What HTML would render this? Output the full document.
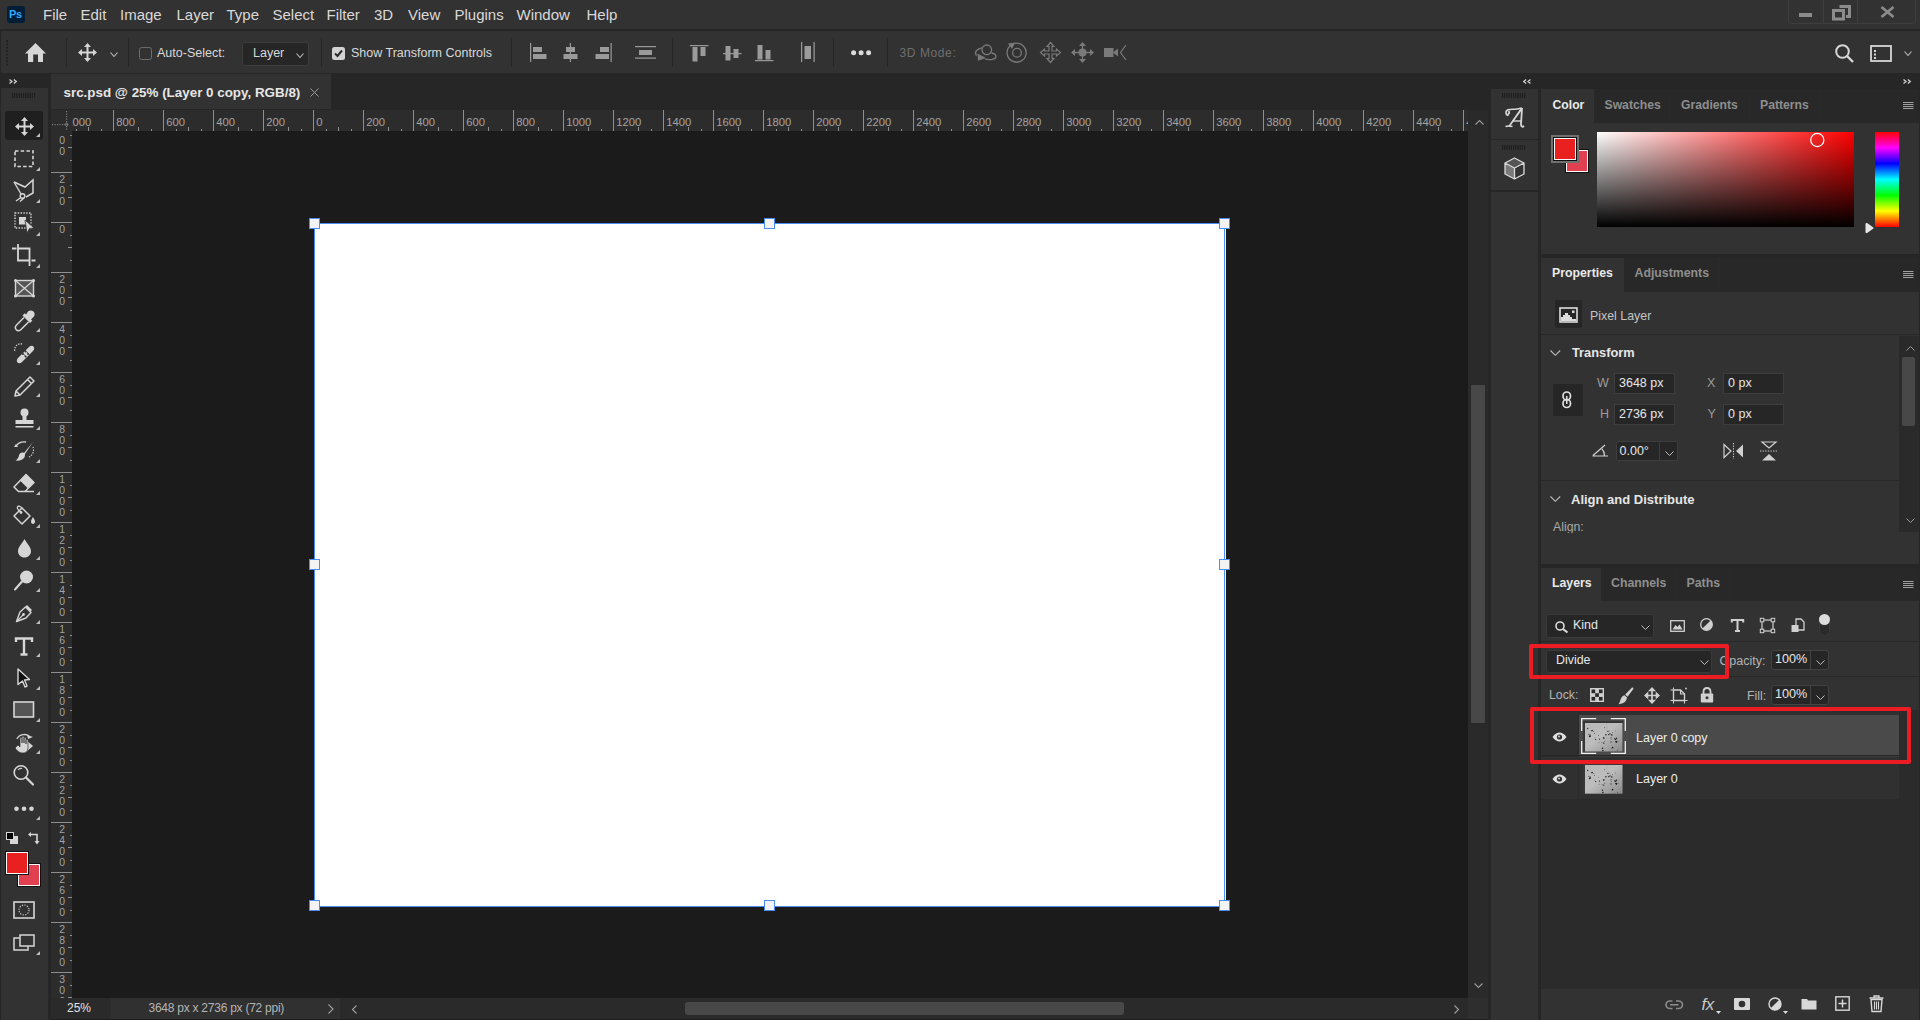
<!DOCTYPE html>
<html><head><meta charset="utf-8">
<style>
*{margin:0;padding:0;box-sizing:border-box}
html,body{width:1920px;height:1020px;overflow:hidden;background:#262626;font-family:"Liberation Sans",sans-serif;color:#d6d6d6}
.a{position:absolute}
.t{position:absolute;white-space:nowrap;line-height:1}
svg{position:absolute;overflow:visible}
</style></head><body>
<div class="a" style="left:0px;top:0px;width:1920px;height:30px;background:#323232;"></div>
<div class="a" style="left:0px;top:29px;width:1920px;height:2px;background:#262626;"></div>
<div class="a" style="left:7px;top:6px;width:18px;height:17px;background:#001e36;border-radius:3px"></div>
<div class="t" style="left:9px;top:9px;font-size:11px;font-weight:bold;color:#31a8ff;letter-spacing:-0.3px">Ps</div>
<div class="t" style="left:43px;top:7.30px;font-size:15px;color:#d9d9d9;font-weight:normal;">File</div>
<div class="t" style="left:80.5px;top:7.30px;font-size:15px;color:#d9d9d9;font-weight:normal;">Edit</div>
<div class="t" style="left:120px;top:7.30px;font-size:15px;color:#d9d9d9;font-weight:normal;">Image</div>
<div class="t" style="left:176.5px;top:7.30px;font-size:15px;color:#d9d9d9;font-weight:normal;">Layer</div>
<div class="t" style="left:226.5px;top:7.30px;font-size:15px;color:#d9d9d9;font-weight:normal;">Type</div>
<div class="t" style="left:272.5px;top:7.30px;font-size:15px;color:#d9d9d9;font-weight:normal;">Select</div>
<div class="t" style="left:326.5px;top:7.30px;font-size:15px;color:#d9d9d9;font-weight:normal;">Filter</div>
<div class="t" style="left:374px;top:7.30px;font-size:15px;color:#d9d9d9;font-weight:normal;">3D</div>
<div class="t" style="left:408px;top:7.30px;font-size:15px;color:#d9d9d9;font-weight:normal;">View</div>
<div class="t" style="left:454.5px;top:7.30px;font-size:15px;color:#d9d9d9;font-weight:normal;">Plugins</div>
<div class="t" style="left:516.5px;top:7.30px;font-size:15px;color:#d9d9d9;font-weight:normal;">Window</div>
<div class="t" style="left:586.5px;top:7.30px;font-size:15px;color:#d9d9d9;font-weight:normal;">Help</div>
<div class="a" style="left:1788px;top:-5px;width:128px;height:29px;border:1px solid #3e3e3e;border-radius:4px"></div>
<div class="a" style="left:1823px;top:0px;width:1px;height:23px;background:#3e3e3e;"></div>
<div class="a" style="left:1857px;top:0px;width:1px;height:23px;background:#3e3e3e;"></div>
<div class="a" style="left:1799px;top:13px;width:13px;height:4px;background:#8c8c8c;"></div>
<svg style="left:1832px;top:5px;" width="19" height="15" viewBox="0 0 19 15"><path d="M7.5 1.5h10v10h-3.5" fill="none" stroke="#8c8c8c" stroke-width="3"/><rect x="1.5" y="5.5" width="10" height="8.5" fill="none" stroke="#8c8c8c" stroke-width="3"/></svg>
<svg style="left:1880px;top:6px;" width="15" height="12" viewBox="0 0 15 12"><path d="M1.5 1 L13.5 11 M13.5 1 L1.5 11" stroke="#8c8c8c" stroke-width="2.7"/></svg>
<div class="a" style="left:0px;top:31px;width:1920px;height:42px;background:#323232;"></div>
<div class="a" style="left:0px;top:31px;width:1px;height:42px;background:#262626;"></div>
<svg style="left:6px;top:40px;" width="3" height="25" viewBox="0 0 3 25"><rect x="0.5" y="0.0" width="1.5" height="1.8" fill="#1e1e1e"/><rect x="0.5" y="3.4" width="1.5" height="1.8" fill="#1e1e1e"/><rect x="0.5" y="6.8" width="1.5" height="1.8" fill="#1e1e1e"/><rect x="0.5" y="10.2" width="1.5" height="1.8" fill="#1e1e1e"/><rect x="0.5" y="13.6" width="1.5" height="1.8" fill="#1e1e1e"/><rect x="0.5" y="17.0" width="1.5" height="1.8" fill="#1e1e1e"/><rect x="0.5" y="20.4" width="1.5" height="1.8" fill="#1e1e1e"/><rect x="0.5" y="23.8" width="1.5" height="1.8" fill="#1e1e1e"/></svg>
<svg style="left:25px;top:43px;" width="22" height="20" viewBox="0 0 22 20"><path d="M10.5 0 L21 10.5 L18 10.5 L18 19 L13 19 L13 11.5 L8.2 11.5 L8.2 19 L3 19 L3 10.5 L0 10.5 Z" fill="#d6d6d6"/></svg>
<div class="a" style="left:66px;top:38px;width:1px;height:29px;background:#262626;"></div>
<div class="a" style="left:128px;top:38px;width:1px;height:29px;background:#262626;"></div>
<div class="a" style="left:321px;top:38px;width:1px;height:29px;background:#262626;"></div>
<div class="a" style="left:511px;top:38px;width:1px;height:29px;background:#262626;"></div>
<div class="a" style="left:672px;top:38px;width:1px;height:29px;background:#262626;"></div>
<div class="a" style="left:833px;top:38px;width:1px;height:29px;background:#262626;"></div>
<div class="a" style="left:887px;top:38px;width:1px;height:29px;background:#262626;"></div>
<svg style="left:77.5px;top:42.5px;" width="19" height="19" viewBox="0 0 19 19"><path d="M9.5 0 L13 4 L10.5 4 L10.5 8.5 L15 8.5 L15 6 L19 9.5 L15 13 L15 10.5 L10.5 10.5 L10.5 15 L13 15 L9.5 19 L6 15 L8.5 15 L8.5 10.5 L4 10.5 L4 13 L0 9.5 L4 6 L4 8.5 L8.5 8.5 L8.5 4 L6 4 Z" fill="#d6d6d6"/></svg>
<svg style="left:109.5px;top:51.5px;" width="8" height="5" viewBox="0 0 8 5"><path d="M0.5 0.5 L4.0 4.5 L7.5 0.5" fill="none" stroke="#bdbdbd" stroke-width="1.1"/></svg>
<div class="a" style="left:139px;top:47px;width:13px;height:13px;border:1.5px solid #6b6b6b;border-radius:2.5px"></div>
<div class="t" style="left:157px;top:47.42px;font-size:12.5px;color:#d9d9d9;font-weight:normal;">Auto-Select:</div>
<div class="a" style="left:242px;top:42px;width:67px;height:24px;background:#262626;border:1px solid #3d3d3d;border-radius:3px"></div>
<div class="t" style="left:253px;top:47.42px;font-size:12.5px;color:#d9d9d9;font-weight:normal;">Layer</div>
<svg style="left:296px;top:53px;" width="8" height="5" viewBox="0 0 8 5"><path d="M0.5 0.5 L4.0 4.5 L7.5 0.5" fill="none" stroke="#bdbdbd" stroke-width="1.1"/></svg>
<div class="a" style="left:332px;top:47px;width:13px;height:13px;background:#d3d3d3;border-radius:2.5px"></div>
<svg style="left:334px;top:49px;" width="9" height="9" viewBox="0 0 9 9"><path d="M1 4.5 L3.5 7 L8 1.5" fill="none" stroke="#2a2a2a" stroke-width="2"/></svg>
<div class="t" style="left:351px;top:47.42px;font-size:12.5px;color:#d9d9d9;font-weight:normal;">Show Transform Controls</div>
<svg style="left:530px;top:43px;" width="17" height="20" viewBox="0 0 17 20"><rect x="0" y="0" width="1.2" height="19" fill="#9a9a9a"/><rect x="3" y="4" width="9" height="5" fill="#9a9a9a"/><rect x="3" y="11" width="13.5" height="5" fill="#9a9a9a"/></svg>
<svg style="left:563px;top:43px;" width="15" height="20" viewBox="0 0 15 20"><rect x="6.8" y="0" width="1.2" height="19" fill="#9a9a9a"/><rect x="3" y="4" width="9" height="5" fill="#9a9a9a"/><rect x="0.5" y="11" width="14" height="5" fill="#9a9a9a"/></svg>
<svg style="left:595px;top:43px;" width="17" height="20" viewBox="0 0 17 20"><rect x="15.5" y="0" width="1.2" height="19" fill="#9a9a9a"/><rect x="5" y="4" width="9" height="5" fill="#9a9a9a"/><rect x="0.5" y="11" width="13.5" height="5" fill="#9a9a9a"/></svg>
<svg style="left:635px;top:46px;" width="22" height="13" viewBox="0 0 22 13"><rect x="0" y="0" width="21" height="1.2" fill="#9a9a9a"/><rect x="4" y="4" width="13" height="5" fill="#9a9a9a"/><rect x="0" y="11.5" width="21" height="1.2" fill="#9a9a9a"/></svg>
<svg style="left:690px;top:45px;" width="19" height="17" viewBox="0 0 19 17"><rect x="0" y="0" width="18.5" height="1.2" fill="#9a9a9a"/><rect x="2.5" y="2" width="5" height="14.5" fill="#9a9a9a"/><rect x="10.5" y="2" width="5" height="9" fill="#9a9a9a"/></svg>
<svg style="left:723px;top:45px;" width="19" height="17" viewBox="0 0 19 17"><rect x="0" y="8" width="18.5" height="1.2" fill="#9a9a9a"/><rect x="2.5" y="1" width="5" height="14.5" fill="#9a9a9a"/><rect x="10.5" y="4" width="5" height="9" fill="#9a9a9a"/></svg>
<svg style="left:755px;top:44px;" width="19" height="18" viewBox="0 0 19 18"><rect x="0" y="16" width="18.5" height="1.2" fill="#9a9a9a"/><rect x="2.5" y="1" width="5" height="14.5" fill="#9a9a9a"/><rect x="10.5" y="6" width="5" height="9.5" fill="#9a9a9a"/></svg>
<svg style="left:801px;top:42px;" width="14" height="21" viewBox="0 0 14 21"><rect x="0" y="0" width="1.2" height="20" fill="#9a9a9a"/><rect x="12.5" y="0" width="1.2" height="20" fill="#9a9a9a"/><rect x="3.5" y="4" width="6.5" height="13" fill="#9a9a9a"/></svg>
<svg style="left:851px;top:50px;" width="21" height="6" viewBox="0 0 21 6"><circle cx="2.6" cy="2.8" r="2.5" fill="#dcdcdc"/><circle cx="10.1" cy="2.8" r="2.5" fill="#dcdcdc"/><circle cx="17.6" cy="2.8" r="2.5" fill="#dcdcdc"/></svg>
<div class="t" style="left:899.5px;top:46.84px;font-size:12px;color:#6e6e6e;font-weight:normal;letter-spacing:0.6px">3D Mode:</div>
<svg style="left:973.5px;top:44px;" width="24" height="18" viewBox="0 0 24 18"><circle cx="12.8" cy="5.8" r="4.8" fill="none" stroke="#7a7a7a" stroke-width="1.3"/><path d="M7.8 3.8 C2.5 5 0 8.5 2.5 11.5" fill="none" stroke="#7a7a7a" stroke-width="1.3"/><path d="M3.5 9.5 L12 14 L4 16.8 Z" fill="#7a7a7a"/><path d="M11 15.2 C16 16.2 22 15.5 22 12.5 C22 10.8 20.5 9.5 17.5 9" fill="none" stroke="#7a7a7a" stroke-width="1.3"/></svg>
<svg style="left:1006px;top:42px;" width="22" height="21" viewBox="0 0 22 21"><path d="M5 3 A9.5 9.5 0 1 0 9 1.3" fill="none" stroke="#7a7a7a" stroke-width="1.3"/><circle cx="11" cy="10.8" r="4.4" fill="none" stroke="#7a7a7a" stroke-width="1.3"/><path d="M2 1.5 L9.5 0.5 L6 7 Z" fill="#7a7a7a"/></svg>
<svg style="left:1040px;top:42px;" width="21" height="21" viewBox="0 0 21 21"><path d="M10.5 0.5 L14 4.5 L12 4.5 L12 9 L16.5 9 L16.5 7 L20.5 10.5 L16.5 14 L16.5 12 L12 12 L12 16.5 L14 16.5 L10.5 20.5 L7 16.5 L9 16.5 L9 12 L4.5 12 L4.5 14 L0.5 10.5 L4.5 7 L4.5 9 L9 9 L9 4.5 L7 4.5 Z" fill="none" stroke="#7a7a7a" stroke-width="1.2"/></svg>
<svg style="left:1071px;top:42px;" width="23" height="21" viewBox="0 0 23 21"><circle cx="11.5" cy="10.5" r="4" fill="#7a7a7a"/><path d="M11.5 0 L15 4 L8 4 Z M11.5 21 L15 17 L8 17 Z M0 10.5 L4 7 L4 14 Z M23 10.5 L19 7 L19 14 Z" fill="#7a7a7a"/><path d="M11.5 3 V18 M3 10.5 H20" stroke="#7a7a7a" stroke-width="1.3"/></svg>
<svg style="left:1104px;top:44px;" width="24" height="17" viewBox="0 0 24 17"><rect x="0" y="4" width="9.5" height="9" fill="#7a7a7a"/><path d="M9 8.5 L14 4.5 L14 12.5 Z" fill="#7a7a7a"/><path d="M22 1 L16.5 8.5 L22 16" fill="none" stroke="#7a7a7a" stroke-width="1.2"/></svg>
<svg style="left:1835px;top:44px;" width="20" height="19" viewBox="0 0 20 19"><circle cx="7.5" cy="7.5" r="6.3" fill="none" stroke="#d6d6d6" stroke-width="2"/><path d="M12 12 L18 18" stroke="#d6d6d6" stroke-width="2.4"/></svg>
<svg style="left:1870px;top:45px;" width="22" height="18" viewBox="0 0 22 18"><rect x="1" y="1" width="20" height="15" fill="none" stroke="#d6d6d6" stroke-width="1.8"/><rect x="4" y="5" width="2" height="2" fill="#d6d6d6"/><rect x="4" y="8.5" width="2" height="2" fill="#d6d6d6"/><rect x="4" y="12" width="2" height="2" fill="#d6d6d6"/></svg>
<svg style="left:1904px;top:51px;" width="8" height="5" viewBox="0 0 8 5"><path d="M0.5 0.5 L4.0 4.5 L7.5 0.5" fill="none" stroke="#bdbdbd" stroke-width="1.1"/></svg>
<div class="a" style="left:0px;top:73px;width:1920px;height:947px;background:#262626;"></div>
<div class="a" style="left:48px;top:73px;width:3px;height:947px;background:#262626;"></div>
<div class="a" style="left:0px;top:73px;width:1px;height:947px;background:#262626;"></div>
<div class="a" style="left:1px;top:73px;width:47px;height:15px;background:#262626;"></div>
<div class="a" style="left:1px;top:88px;width:47px;height:932px;background:#323232;"></div>
<svg style="left:9px;top:79px;" width="8" height="5" viewBox="0 0 8 5"><path d="M0.5 0.5 L3 2.5 L0.5 4.5 M4.8 0.5 L7.3 2.5 L4.8 4.5" fill="none" stroke="#d0d0d0" stroke-width="1.3"/></svg>
<svg style="left:12px;top:93px;" width="25" height="6" viewBox="0 0 25 6"><rect x="0.0" y="0" width="1.2" height="5" fill="#1f1f1f"/><rect x="2.2" y="0" width="1.2" height="5" fill="#1f1f1f"/><rect x="4.4" y="0" width="1.2" height="5" fill="#1f1f1f"/><rect x="6.6000000000000005" y="0" width="1.2" height="5" fill="#1f1f1f"/><rect x="8.8" y="0" width="1.2" height="5" fill="#1f1f1f"/><rect x="11.0" y="0" width="1.2" height="5" fill="#1f1f1f"/><rect x="13.200000000000001" y="0" width="1.2" height="5" fill="#1f1f1f"/><rect x="15.400000000000002" y="0" width="1.2" height="5" fill="#1f1f1f"/><rect x="17.6" y="0" width="1.2" height="5" fill="#1f1f1f"/><rect x="19.8" y="0" width="1.2" height="5" fill="#1f1f1f"/><rect x="22.0" y="0" width="1.2" height="5" fill="#1f1f1f"/></svg>
<div class="a" style="left:5px;top:111px;width:38px;height:29px;background:#1f1f1f;border-radius:3px"></div>
<svg style="left:14.5px;top:116.5px;" width="19" height="19" viewBox="0 0 19 19"><path d="M9.5 0 L13 4 L10.5 4 L10.5 8.5 L15 8.5 L15 6 L19 9.5 L15 13 L15 10.5 L10.5 10.5 L10.5 15 L13 15 L9.5 19 L6 15 L8.5 15 L8.5 10.5 L4 10.5 L4 13 L0 9.5 L4 6 L4 8.5 L8.5 8.5 L8.5 4 L6 4 Z" fill="#d6d6d6"/></svg>
<svg style="left:36px;top:133px;" width="4" height="4" viewBox="0 0 4 4"><path d="M4 0 L4 4 L0 4 Z" fill="#bdbdbd"/></svg>
<svg style="left:14px;top:150px;" width="20" height="18" viewBox="0 0 20 18"><rect x="1" y="1" width="18" height="15.5" fill="none" stroke="#d6d6d6" stroke-width="1.6" stroke-dasharray="3.5 2.2"/></svg>
<svg style="left:36px;top:167px;" width="4" height="4" viewBox="0 0 4 4"><path d="M4 0 L4 4 L0 4 Z" fill="#bdbdbd"/></svg>
<svg style="left:13px;top:179px;" width="22" height="23" viewBox="0 0 22 23"><path d="M1 3 L12 8 L20 1 L20 14 L13 18" fill="none" stroke="#d6d6d6" stroke-width="1.5"/><circle cx="9.5" cy="17" r="2.3" fill="none" stroke="#d6d6d6" stroke-width="1.4"/><path d="M8 18.5 L3 22 M11 19 L7 22.5" stroke="#d6d6d6" stroke-width="1.4"/><path d="M1 3 L8 15" stroke="#d6d6d6" stroke-width="1.4"/></svg>
<svg style="left:36px;top:199px;" width="4" height="4" viewBox="0 0 4 4"><path d="M4 0 L4 4 L0 4 Z" fill="#bdbdbd"/></svg>
<svg style="left:14px;top:212px;" width="21" height="21" viewBox="0 0 21 21"><rect x="1" y="1" width="16" height="15" fill="none" stroke="#d6d6d6" stroke-width="1.4" stroke-dasharray="1.4 1.4"/><rect x="5" y="5" width="7" height="7.5" fill="#d6d6d6"/><path d="M11 8 L20 16 L15.5 16.5 L13 21 Z" fill="#d6d6d6" stroke="#323232" stroke-width="0.8"/></svg>
<svg style="left:36px;top:232px;" width="4" height="4" viewBox="0 0 4 4"><path d="M4 0 L4 4 L0 4 Z" fill="#bdbdbd"/></svg>
<svg style="left:12px;top:244px;" width="24" height="23" viewBox="0 0 24 23"><path d="M0 4.5 H4.5 M6 0 V16.5 H18 M6.5 4.5 H17.5 V22 M19.5 16.5 H23.5" fill="none" stroke="#d6d6d6" stroke-width="1.8"/></svg>
<svg style="left:36px;top:264px;" width="4" height="4" viewBox="0 0 4 4"><path d="M4 0 L4 4 L0 4 Z" fill="#bdbdbd"/></svg>
<svg style="left:14px;top:279px;" width="21" height="19" viewBox="0 0 21 19"><rect x="1.5" y="1.5" width="18" height="15.5" fill="#555" stroke="#d6d6d6" stroke-width="1.4"/><path d="M1.5 1.5 L19.5 17 M19.5 1.5 L1.5 17" stroke="#d6d6d6" stroke-width="1.2"/><circle cx="1.5" cy="1.5" r="1.5" fill="#d6d6d6"/><circle cx="1.5" cy="17" r="1.5" fill="#d6d6d6"/><circle cx="19.5" cy="1.5" r="1.5" fill="#d6d6d6"/><circle cx="19.5" cy="17" r="1.5" fill="#d6d6d6"/></svg>
<svg style="left:14px;top:310px;" width="21" height="21" viewBox="0 0 21 21"><path d="M14 1.5 C15.5 0 18 0 19.5 1.5 C21 3 21 5.5 19.5 7 L17 9.5 L18.3 10.8 L16 13 L8.5 5.5 L10.7 3.3 L12 4.6 Z" fill="#d6d6d6"/><path d="M10 7.5 L2.5 15 C1 16.5 1 18.5 2.3 19.7 C3.5 21 5.5 21 7 19.5 L14.5 12" fill="none" stroke="#d6d6d6" stroke-width="1.5"/></svg>
<svg style="left:36px;top:328px;" width="4" height="4" viewBox="0 0 4 4"><path d="M4 0 L4 4 L0 4 Z" fill="#bdbdbd"/></svg>
<svg style="left:13px;top:342px;" width="22" height="22" viewBox="0 0 22 22"><path d="M9 2 A6 6 0 0 0 2 10" fill="none" stroke="#d6d6d6" stroke-width="1.3" stroke-dasharray="1.3 1.3"/><path d="M5 16 L16 5 C17.5 3.5 19.5 3.5 20.5 4.5 C21.5 5.5 21.5 7.5 20 9 L9 20 C7.5 21.5 5.5 21.5 4.5 20.5 C3.5 19.5 3.5 17.5 5 16 Z" fill="#d6d6d6"/><g fill="#323232"><circle cx="10" cy="12" r="0.9"/><circle cx="12.5" cy="9.5" r="0.9"/><circle cx="12.5" cy="14.5" r="0.9"/><circle cx="15" cy="12" r="0.9"/></g><path d="M8.5 10 L13.5 15 M11 7.5 L16.5 12.5" stroke="#323232" stroke-width="0.8"/></svg>
<svg style="left:36px;top:361px;" width="4" height="4" viewBox="0 0 4 4"><path d="M4 0 L4 4 L0 4 Z" fill="#bdbdbd"/></svg>
<svg style="left:14px;top:376px;" width="21" height="20" viewBox="0 0 21 20"><path d="M16 1 L20 5 L6 19 L1 20 L2 15 Z M13.5 3.5 L17.5 7.5 M2 15 L6 19" fill="none" stroke="#d6d6d6" stroke-width="1.5" stroke-linejoin="round"/></svg>
<svg style="left:36px;top:393px;" width="4" height="4" viewBox="0 0 4 4"><path d="M4 0 L4 4 L0 4 Z" fill="#bdbdbd"/></svg>
<svg style="left:14px;top:408px;" width="21" height="21" viewBox="0 0 21 21"><circle cx="10.5" cy="4.5" r="4" fill="#d6d6d6"/><rect x="8.5" y="7" width="4" height="5" fill="#d6d6d6"/><path d="M1.5 12 H19.5 V16 H1.5 Z" fill="#d6d6d6"/><rect x="1.5" y="18" width="18" height="1.5" fill="#d6d6d6"/></svg>
<svg style="left:36px;top:426px;" width="4" height="4" viewBox="0 0 4 4"><path d="M4 0 L4 4 L0 4 Z" fill="#bdbdbd"/></svg>
<svg style="left:12px;top:440px;" width="24" height="22" viewBox="0 0 24 22"><path d="M2 7 H6 L4 4 Z" fill="#d6d6d6"/><path d="M4 6 C6 3 10 1.5 14 2" fill="none" stroke="#d6d6d6" stroke-width="1.4"/><path d="M21 2 L12 13 C10 12 7.5 13 7 15.5 C6.5 18 5 19.5 3.5 20.5 C7 21 10.5 20 12 18 C13 16.5 13 15 13 14 Z" fill="#d6d6d6"/><path d="M21 7 A8 8 0 0 1 17 17" fill="none" stroke="#d6d6d6" stroke-width="1.2" stroke-dasharray="1.3 1.3"/></svg>
<svg style="left:36px;top:459px;" width="4" height="4" viewBox="0 0 4 4"><path d="M4 0 L4 4 L0 4 Z" fill="#bdbdbd"/></svg>
<svg style="left:12px;top:473px;" width="23" height="21" viewBox="0 0 23 21"><path d="M14 1.5 L22 9.5 L13 18.5 L6.5 18.5 L2 14 Z" fill="none" stroke="#d6d6d6" stroke-width="1.5" stroke-linejoin="round"/><path d="M14 1.5 L22 9.5 L16 15.5 L8 7.5 Z" fill="#d6d6d6"/><path d="M13 18.5 H22" stroke="#d6d6d6" stroke-width="1.5"/></svg>
<svg style="left:36px;top:491px;" width="4" height="4" viewBox="0 0 4 4"><path d="M4 0 L4 4 L0 4 Z" fill="#bdbdbd"/></svg>
<svg style="left:13px;top:505px;" width="24" height="22" viewBox="0 0 24 22"><path d="M9 3 L17 11 L9 19 L1 11 Z" fill="none" stroke="#d6d6d6" stroke-width="1.5" stroke-linejoin="round"/><path d="M9 3 C7 1 5 0.5 4.5 2 C4 3.5 6 6 8 7.5" fill="none" stroke="#d6d6d6" stroke-width="1.3"/><circle cx="8" cy="7.5" r="1.4" fill="#d6d6d6"/><path d="M20 12 C21 14 22 15 22 16.5 C22 18 21 19 20 19 C19 19 18 18 18 16.5 C18 15 19 14 20 12 Z" fill="#d6d6d6"/></svg>
<svg style="left:36px;top:524px;" width="4" height="4" viewBox="0 0 4 4"><path d="M4 0 L4 4 L0 4 Z" fill="#bdbdbd"/></svg>
<svg style="left:17px;top:539px;" width="15" height="19" viewBox="0 0 15 19"><path d="M7.5 0 C9.5 4 14 8 14 12 C14 16 11 18.5 7.5 18.5 C4 18.5 1 16 1 12 C1 8 5.5 4 7.5 0 Z" fill="#d6d6d6"/></svg>
<svg style="left:36px;top:556px;" width="4" height="4" viewBox="0 0 4 4"><path d="M4 0 L4 4 L0 4 Z" fill="#bdbdbd"/></svg>
<svg style="left:14px;top:570px;" width="20" height="21" viewBox="0 0 20 21"><circle cx="12.5" cy="7" r="6.5" fill="#d6d6d6"/><path d="M8 11.5 L1 19.5" stroke="#d6d6d6" stroke-width="2" stroke-linecap="round"/></svg>
<svg style="left:36px;top:588px;" width="4" height="4" viewBox="0 0 4 4"><path d="M4 0 L4 4 L0 4 Z" fill="#bdbdbd"/></svg>
<svg style="left:15px;top:604px;" width="18" height="19" viewBox="0 0 18 19"><path d="M12 1 L17 6 L15.5 7.5 L10.5 2.5 Z" fill="#d6d6d6"/><path d="M10.5 3 L16 8.5 L11 14 L1.5 17.5 L5 8 Z" fill="none" stroke="#d6d6d6" stroke-width="1.4" stroke-linejoin="round"/><circle cx="8.5" cy="10.5" r="1.4" fill="#d6d6d6"/><path d="M1.5 17.5 L8 11" stroke="#d6d6d6" stroke-width="1.1"/></svg>
<svg style="left:36px;top:620px;" width="4" height="4" viewBox="0 0 4 4"><path d="M4 0 L4 4 L0 4 Z" fill="#bdbdbd"/></svg>
<svg style="left:15px;top:637px;" width="18" height="19" viewBox="0 0 18 19"><path d="M1 5 V1.5 H17 V5 M9 1.5 V17.5 M5.5 17.5 H12.5" fill="none" stroke="#d6d6d6" stroke-width="2.4"/></svg>
<svg style="left:36px;top:653px;" width="4" height="4" viewBox="0 0 4 4"><path d="M4 0 L4 4 L0 4 Z" fill="#bdbdbd"/></svg>
<svg style="left:17px;top:668px;" width="14" height="20" viewBox="0 0 14 20"><path d="M1 1 L12.5 11.5 L7.5 12 L10 18 L8 19 L5.5 13 L1 16.5 Z" fill="#111" stroke="#d6d6d6" stroke-width="1.4" stroke-linejoin="round"/></svg>
<svg style="left:36px;top:686px;" width="4" height="4" viewBox="0 0 4 4"><path d="M4 0 L4 4 L0 4 Z" fill="#bdbdbd"/></svg>
<svg style="left:13px;top:701px;" width="22" height="17" viewBox="0 0 22 17"><rect x="1" y="1" width="19.5" height="15" fill="#555" stroke="#d6d6d6" stroke-width="1.6"/></svg>
<svg style="left:36px;top:718px;" width="4" height="4" viewBox="0 0 4 4"><path d="M4 0 L4 4 L0 4 Z" fill="#bdbdbd"/></svg>
<svg style="left:13px;top:732px;" width="23" height="23" viewBox="0 0 23 23"><path d="M4 7 C6 2 14 1 17 5" fill="none" stroke="#d6d6d6" stroke-width="1.3"/><path d="M14 3 L20 5 L15 7 Z" fill="#d6d6d6"/><path d="M12 7 L20 14 L12 21 Z" fill="#d6d6d6"/><path d="M2 16 L5 13 L7 15 L7 6 C7 5 9 5 9 6 L9 11 L9 5 C9 4 11 4 11 5 L11 11 L11 6 C11 5 13 5 13 6 L13 12 L13 8 C13 7 15 7 15 8 L15 16 C15 19 13 21 10 21 C7 21 5 20 2 16 Z" fill="#d6d6d6" stroke="#323232" stroke-width="0.7"/></svg>
<svg style="left:36px;top:750px;" width="4" height="4" viewBox="0 0 4 4"><path d="M4 0 L4 4 L0 4 Z" fill="#bdbdbd"/></svg>
<svg style="left:13px;top:764px;" width="22" height="22" viewBox="0 0 22 22"><circle cx="8" cy="8.5" r="6.8" fill="none" stroke="#d6d6d6" stroke-width="1.6"/><path d="M5 6 A4 4 0 0 1 9 4.5" fill="none" stroke="#d6d6d6" stroke-width="1.1"/><path d="M13 13.5 L20 20.5" stroke="#d6d6d6" stroke-width="2.2" stroke-linecap="round"/></svg>
<svg style="left:13px;top:805px;" width="22" height="8" viewBox="0 0 22 8"><circle cx="3.5" cy="3.7" r="2.3" fill="#d6d6d6"/><circle cx="11.0" cy="3.7" r="2.3" fill="#d6d6d6"/><circle cx="18.5" cy="3.7" r="2.3" fill="#d6d6d6"/></svg>
<svg style="left:36px;top:816px;" width="4" height="4" viewBox="0 0 4 4"><path d="M4 0 L4 4 L0 4 Z" fill="#bdbdbd"/></svg>
<div class="a" style="left:10px;top:836px;width:8px;height:8px;background:#d6d6d6;"></div>
<div class="a" style="left:6px;top:832px;width:8px;height:8px;background:#000;border:1px solid #d6d6d6"></div>
<svg style="left:27px;top:832px;" width="13" height="13" viewBox="0 0 13 13"><path d="M1 2.5 L4 0 L4 5 Z" fill="#d6d6d6"/><path d="M3 2.5 H10 V9" fill="none" stroke="#d6d6d6" stroke-width="1.6"/><path d="M7.5 9 L10 12.5 L12.5 9 Z" fill="#d6d6d6"/></svg>
<div class="a" style="left:18px;top:864px;width:22px;height:22px;background:#e0404f;border:1.5px solid #fafafa;outline:1px solid #111"></div>
<div class="a" style="left:6px;top:852px;width:22px;height:22px;background:#e82020;border:1.5px solid #fafafa;outline:1px solid #111"></div>
<svg style="left:13px;top:901px;" width="22" height="18" viewBox="0 0 22 18"><rect x="1" y="1" width="20" height="16" fill="none" stroke="#d6d6d6" stroke-width="1.6"/><circle cx="11" cy="9" r="5" fill="none" stroke="#d6d6d6" stroke-width="1.2" stroke-dasharray="1.2 1.4"/></svg>
<svg style="left:13px;top:934px;" width="22" height="18" viewBox="0 0 22 18"><rect x="1" y="4" width="14" height="12" fill="none" stroke="#d6d6d6" stroke-width="1.5"/><rect x="7" y="1" width="14" height="11" fill="#323232" stroke="#d6d6d6" stroke-width="1.5"/></svg>
<svg style="left:36px;top:951px;" width="4" height="4" viewBox="0 0 4 4"><path d="M4 0 L4 4 L0 4 Z" fill="#bdbdbd"/></svg>
<div class="a" style="left:51px;top:73px;width:1437px;height:37px;background:#262626;"></div>
<div class="a" style="left:51px;top:74px;width:280px;height:35px;background:#323232;"></div>
<div class="t" style="left:63.5px;top:86.16px;font-size:13.4px;color:#e6e6e6;font-weight:bold;">src.psd @ 25% (Layer 0 copy, RGB/8)</div>
<svg style="left:310px;top:88px;" width="9" height="9" viewBox="0 0 9 9"><path d="M0.5 0.5 L8.5 8.5 M8.5 0.5 L0.5 8.5" stroke="#9a9a9a" stroke-width="1"/></svg>
<div class="a" style="left:51px;top:110px;width:1417px;height:21px;background:#2c2c2c;"></div>
<div class="a" style="left:51px;top:131px;width:21px;height:867px;background:#2c2c2c;"></div>
<div class="a" style="left:76px;top:129px;width:1px;height:2px;background:#8f8f8f;"></div>
<div class="a" style="left:88px;top:127px;width:1px;height:4px;background:#8f8f8f;"></div>
<div class="a" style="left:101px;top:129px;width:1px;height:2px;background:#8f8f8f;"></div>
<div class="a" style="left:113px;top:110px;width:1px;height:21px;background:#8f8f8f;"></div>
<div class="a" style="left:126px;top:129px;width:1px;height:2px;background:#8f8f8f;"></div>
<div class="a" style="left:138px;top:127px;width:1px;height:4px;background:#8f8f8f;"></div>
<div class="a" style="left:151px;top:129px;width:1px;height:2px;background:#8f8f8f;"></div>
<div class="a" style="left:163px;top:110px;width:1px;height:21px;background:#8f8f8f;"></div>
<div class="a" style="left:176px;top:129px;width:1px;height:2px;background:#8f8f8f;"></div>
<div class="a" style="left:188px;top:127px;width:1px;height:4px;background:#8f8f8f;"></div>
<div class="a" style="left:201px;top:129px;width:1px;height:2px;background:#8f8f8f;"></div>
<div class="a" style="left:213px;top:110px;width:1px;height:21px;background:#8f8f8f;"></div>
<div class="a" style="left:226px;top:129px;width:1px;height:2px;background:#8f8f8f;"></div>
<div class="a" style="left:238px;top:127px;width:1px;height:4px;background:#8f8f8f;"></div>
<div class="a" style="left:251px;top:129px;width:1px;height:2px;background:#8f8f8f;"></div>
<div class="a" style="left:263px;top:110px;width:1px;height:21px;background:#8f8f8f;"></div>
<div class="a" style="left:276px;top:129px;width:1px;height:2px;background:#8f8f8f;"></div>
<div class="a" style="left:288px;top:127px;width:1px;height:4px;background:#8f8f8f;"></div>
<div class="a" style="left:301px;top:129px;width:1px;height:2px;background:#8f8f8f;"></div>
<div class="a" style="left:313px;top:110px;width:1px;height:21px;background:#8f8f8f;"></div>
<div class="a" style="left:326px;top:129px;width:1px;height:2px;background:#8f8f8f;"></div>
<div class="a" style="left:338px;top:127px;width:1px;height:4px;background:#8f8f8f;"></div>
<div class="a" style="left:351px;top:129px;width:1px;height:2px;background:#8f8f8f;"></div>
<div class="a" style="left:363px;top:110px;width:1px;height:21px;background:#8f8f8f;"></div>
<div class="a" style="left:376px;top:129px;width:1px;height:2px;background:#8f8f8f;"></div>
<div class="a" style="left:388px;top:127px;width:1px;height:4px;background:#8f8f8f;"></div>
<div class="a" style="left:401px;top:129px;width:1px;height:2px;background:#8f8f8f;"></div>
<div class="a" style="left:413px;top:110px;width:1px;height:21px;background:#8f8f8f;"></div>
<div class="a" style="left:426px;top:129px;width:1px;height:2px;background:#8f8f8f;"></div>
<div class="a" style="left:438px;top:127px;width:1px;height:4px;background:#8f8f8f;"></div>
<div class="a" style="left:451px;top:129px;width:1px;height:2px;background:#8f8f8f;"></div>
<div class="a" style="left:463px;top:110px;width:1px;height:21px;background:#8f8f8f;"></div>
<div class="a" style="left:476px;top:129px;width:1px;height:2px;background:#8f8f8f;"></div>
<div class="a" style="left:488px;top:127px;width:1px;height:4px;background:#8f8f8f;"></div>
<div class="a" style="left:501px;top:129px;width:1px;height:2px;background:#8f8f8f;"></div>
<div class="a" style="left:513px;top:110px;width:1px;height:21px;background:#8f8f8f;"></div>
<div class="a" style="left:526px;top:129px;width:1px;height:2px;background:#8f8f8f;"></div>
<div class="a" style="left:538px;top:127px;width:1px;height:4px;background:#8f8f8f;"></div>
<div class="a" style="left:551px;top:129px;width:1px;height:2px;background:#8f8f8f;"></div>
<div class="a" style="left:563px;top:110px;width:1px;height:21px;background:#8f8f8f;"></div>
<div class="a" style="left:576px;top:129px;width:1px;height:2px;background:#8f8f8f;"></div>
<div class="a" style="left:588px;top:127px;width:1px;height:4px;background:#8f8f8f;"></div>
<div class="a" style="left:601px;top:129px;width:1px;height:2px;background:#8f8f8f;"></div>
<div class="a" style="left:613px;top:110px;width:1px;height:21px;background:#8f8f8f;"></div>
<div class="a" style="left:626px;top:129px;width:1px;height:2px;background:#8f8f8f;"></div>
<div class="a" style="left:638px;top:127px;width:1px;height:4px;background:#8f8f8f;"></div>
<div class="a" style="left:651px;top:129px;width:1px;height:2px;background:#8f8f8f;"></div>
<div class="a" style="left:663px;top:110px;width:1px;height:21px;background:#8f8f8f;"></div>
<div class="a" style="left:676px;top:129px;width:1px;height:2px;background:#8f8f8f;"></div>
<div class="a" style="left:688px;top:127px;width:1px;height:4px;background:#8f8f8f;"></div>
<div class="a" style="left:701px;top:129px;width:1px;height:2px;background:#8f8f8f;"></div>
<div class="a" style="left:713px;top:110px;width:1px;height:21px;background:#8f8f8f;"></div>
<div class="a" style="left:726px;top:129px;width:1px;height:2px;background:#8f8f8f;"></div>
<div class="a" style="left:738px;top:127px;width:1px;height:4px;background:#8f8f8f;"></div>
<div class="a" style="left:751px;top:129px;width:1px;height:2px;background:#8f8f8f;"></div>
<div class="a" style="left:763px;top:110px;width:1px;height:21px;background:#8f8f8f;"></div>
<div class="a" style="left:776px;top:129px;width:1px;height:2px;background:#8f8f8f;"></div>
<div class="a" style="left:788px;top:127px;width:1px;height:4px;background:#8f8f8f;"></div>
<div class="a" style="left:801px;top:129px;width:1px;height:2px;background:#8f8f8f;"></div>
<div class="a" style="left:813px;top:110px;width:1px;height:21px;background:#8f8f8f;"></div>
<div class="a" style="left:826px;top:129px;width:1px;height:2px;background:#8f8f8f;"></div>
<div class="a" style="left:838px;top:127px;width:1px;height:4px;background:#8f8f8f;"></div>
<div class="a" style="left:851px;top:129px;width:1px;height:2px;background:#8f8f8f;"></div>
<div class="a" style="left:863px;top:110px;width:1px;height:21px;background:#8f8f8f;"></div>
<div class="a" style="left:876px;top:129px;width:1px;height:2px;background:#8f8f8f;"></div>
<div class="a" style="left:888px;top:127px;width:1px;height:4px;background:#8f8f8f;"></div>
<div class="a" style="left:901px;top:129px;width:1px;height:2px;background:#8f8f8f;"></div>
<div class="a" style="left:913px;top:110px;width:1px;height:21px;background:#8f8f8f;"></div>
<div class="a" style="left:926px;top:129px;width:1px;height:2px;background:#8f8f8f;"></div>
<div class="a" style="left:938px;top:127px;width:1px;height:4px;background:#8f8f8f;"></div>
<div class="a" style="left:951px;top:129px;width:1px;height:2px;background:#8f8f8f;"></div>
<div class="a" style="left:963px;top:110px;width:1px;height:21px;background:#8f8f8f;"></div>
<div class="a" style="left:976px;top:129px;width:1px;height:2px;background:#8f8f8f;"></div>
<div class="a" style="left:988px;top:127px;width:1px;height:4px;background:#8f8f8f;"></div>
<div class="a" style="left:1001px;top:129px;width:1px;height:2px;background:#8f8f8f;"></div>
<div class="a" style="left:1013px;top:110px;width:1px;height:21px;background:#8f8f8f;"></div>
<div class="a" style="left:1026px;top:129px;width:1px;height:2px;background:#8f8f8f;"></div>
<div class="a" style="left:1038px;top:127px;width:1px;height:4px;background:#8f8f8f;"></div>
<div class="a" style="left:1051px;top:129px;width:1px;height:2px;background:#8f8f8f;"></div>
<div class="a" style="left:1063px;top:110px;width:1px;height:21px;background:#8f8f8f;"></div>
<div class="a" style="left:1076px;top:129px;width:1px;height:2px;background:#8f8f8f;"></div>
<div class="a" style="left:1088px;top:127px;width:1px;height:4px;background:#8f8f8f;"></div>
<div class="a" style="left:1101px;top:129px;width:1px;height:2px;background:#8f8f8f;"></div>
<div class="a" style="left:1113px;top:110px;width:1px;height:21px;background:#8f8f8f;"></div>
<div class="a" style="left:1126px;top:129px;width:1px;height:2px;background:#8f8f8f;"></div>
<div class="a" style="left:1138px;top:127px;width:1px;height:4px;background:#8f8f8f;"></div>
<div class="a" style="left:1151px;top:129px;width:1px;height:2px;background:#8f8f8f;"></div>
<div class="a" style="left:1163px;top:110px;width:1px;height:21px;background:#8f8f8f;"></div>
<div class="a" style="left:1176px;top:129px;width:1px;height:2px;background:#8f8f8f;"></div>
<div class="a" style="left:1188px;top:127px;width:1px;height:4px;background:#8f8f8f;"></div>
<div class="a" style="left:1201px;top:129px;width:1px;height:2px;background:#8f8f8f;"></div>
<div class="a" style="left:1213px;top:110px;width:1px;height:21px;background:#8f8f8f;"></div>
<div class="a" style="left:1226px;top:129px;width:1px;height:2px;background:#8f8f8f;"></div>
<div class="a" style="left:1238px;top:127px;width:1px;height:4px;background:#8f8f8f;"></div>
<div class="a" style="left:1251px;top:129px;width:1px;height:2px;background:#8f8f8f;"></div>
<div class="a" style="left:1263px;top:110px;width:1px;height:21px;background:#8f8f8f;"></div>
<div class="a" style="left:1276px;top:129px;width:1px;height:2px;background:#8f8f8f;"></div>
<div class="a" style="left:1288px;top:127px;width:1px;height:4px;background:#8f8f8f;"></div>
<div class="a" style="left:1301px;top:129px;width:1px;height:2px;background:#8f8f8f;"></div>
<div class="a" style="left:1313px;top:110px;width:1px;height:21px;background:#8f8f8f;"></div>
<div class="a" style="left:1326px;top:129px;width:1px;height:2px;background:#8f8f8f;"></div>
<div class="a" style="left:1338px;top:127px;width:1px;height:4px;background:#8f8f8f;"></div>
<div class="a" style="left:1351px;top:129px;width:1px;height:2px;background:#8f8f8f;"></div>
<div class="a" style="left:1363px;top:110px;width:1px;height:21px;background:#8f8f8f;"></div>
<div class="a" style="left:1376px;top:129px;width:1px;height:2px;background:#8f8f8f;"></div>
<div class="a" style="left:1388px;top:127px;width:1px;height:4px;background:#8f8f8f;"></div>
<div class="a" style="left:1401px;top:129px;width:1px;height:2px;background:#8f8f8f;"></div>
<div class="a" style="left:1413px;top:110px;width:1px;height:21px;background:#8f8f8f;"></div>
<div class="a" style="left:1426px;top:129px;width:1px;height:2px;background:#8f8f8f;"></div>
<div class="a" style="left:1438px;top:127px;width:1px;height:4px;background:#8f8f8f;"></div>
<div class="a" style="left:1451px;top:129px;width:1px;height:2px;background:#8f8f8f;"></div>
<div class="a" style="left:1463px;top:110px;width:1px;height:21px;background:#8f8f8f;"></div>
<div class="a" style="left:72px;top:110px;width:1396px;height:21px;overflow:hidden">
<div class="t" style="left:-5.8px;top:7.23px;font-size:11.3px;color:#a3a3a3">1000</div>
<div class="t" style="left:44.2px;top:7.23px;font-size:11.3px;color:#a3a3a3">800</div>
<div class="t" style="left:94.2px;top:7.23px;font-size:11.3px;color:#a3a3a3">600</div>
<div class="t" style="left:144.2px;top:7.23px;font-size:11.3px;color:#a3a3a3">400</div>
<div class="t" style="left:194.2px;top:7.23px;font-size:11.3px;color:#a3a3a3">200</div>
<div class="t" style="left:244.2px;top:7.23px;font-size:11.3px;color:#a3a3a3">0</div>
<div class="t" style="left:294.2px;top:7.23px;font-size:11.3px;color:#a3a3a3">200</div>
<div class="t" style="left:344.2px;top:7.23px;font-size:11.3px;color:#a3a3a3">400</div>
<div class="t" style="left:394.2px;top:7.23px;font-size:11.3px;color:#a3a3a3">600</div>
<div class="t" style="left:444.2px;top:7.23px;font-size:11.3px;color:#a3a3a3">800</div>
<div class="t" style="left:494.2px;top:7.23px;font-size:11.3px;color:#a3a3a3">1000</div>
<div class="t" style="left:544.2px;top:7.23px;font-size:11.3px;color:#a3a3a3">1200</div>
<div class="t" style="left:594.2px;top:7.23px;font-size:11.3px;color:#a3a3a3">1400</div>
<div class="t" style="left:644.2px;top:7.23px;font-size:11.3px;color:#a3a3a3">1600</div>
<div class="t" style="left:694.2px;top:7.23px;font-size:11.3px;color:#a3a3a3">1800</div>
<div class="t" style="left:744.2px;top:7.23px;font-size:11.3px;color:#a3a3a3">2000</div>
<div class="t" style="left:794.2px;top:7.23px;font-size:11.3px;color:#a3a3a3">2200</div>
<div class="t" style="left:844.2px;top:7.23px;font-size:11.3px;color:#a3a3a3">2400</div>
<div class="t" style="left:894.2px;top:7.23px;font-size:11.3px;color:#a3a3a3">2600</div>
<div class="t" style="left:944.2px;top:7.23px;font-size:11.3px;color:#a3a3a3">2800</div>
<div class="t" style="left:994.2px;top:7.23px;font-size:11.3px;color:#a3a3a3">3000</div>
<div class="t" style="left:1044.2px;top:7.23px;font-size:11.3px;color:#a3a3a3">3200</div>
<div class="t" style="left:1094.2px;top:7.23px;font-size:11.3px;color:#a3a3a3">3400</div>
<div class="t" style="left:1144.2px;top:7.23px;font-size:11.3px;color:#a3a3a3">3600</div>
<div class="t" style="left:1194.2px;top:7.23px;font-size:11.3px;color:#a3a3a3">3800</div>
<div class="t" style="left:1244.2px;top:7.23px;font-size:11.3px;color:#a3a3a3">4000</div>
<div class="t" style="left:1294.2px;top:7.23px;font-size:11.3px;color:#a3a3a3">4200</div>
<div class="t" style="left:1344.2px;top:7.23px;font-size:11.3px;color:#a3a3a3">4400</div>
<div class="t" style="left:1394.2px;top:7.23px;font-size:11.3px;color:#a3a3a3">4600</div>
</div>
<div class="a" style="left:70px;top:135px;width:2px;height:1px;background:#8f8f8f;"></div>
<div class="a" style="left:68px;top:147px;width:4px;height:1px;background:#8f8f8f;"></div>
<div class="a" style="left:70px;top:160px;width:2px;height:1px;background:#8f8f8f;"></div>
<div class="a" style="left:51px;top:172px;width:21px;height:1px;background:#8f8f8f;"></div>
<div class="a" style="left:70px;top:185px;width:2px;height:1px;background:#8f8f8f;"></div>
<div class="a" style="left:68px;top:197px;width:4px;height:1px;background:#8f8f8f;"></div>
<div class="a" style="left:70px;top:210px;width:2px;height:1px;background:#8f8f8f;"></div>
<div class="a" style="left:51px;top:222px;width:21px;height:1px;background:#8f8f8f;"></div>
<div class="a" style="left:70px;top:235px;width:2px;height:1px;background:#8f8f8f;"></div>
<div class="a" style="left:68px;top:247px;width:4px;height:1px;background:#8f8f8f;"></div>
<div class="a" style="left:70px;top:260px;width:2px;height:1px;background:#8f8f8f;"></div>
<div class="a" style="left:51px;top:272px;width:21px;height:1px;background:#8f8f8f;"></div>
<div class="a" style="left:70px;top:285px;width:2px;height:1px;background:#8f8f8f;"></div>
<div class="a" style="left:68px;top:297px;width:4px;height:1px;background:#8f8f8f;"></div>
<div class="a" style="left:70px;top:310px;width:2px;height:1px;background:#8f8f8f;"></div>
<div class="a" style="left:51px;top:322px;width:21px;height:1px;background:#8f8f8f;"></div>
<div class="a" style="left:70px;top:335px;width:2px;height:1px;background:#8f8f8f;"></div>
<div class="a" style="left:68px;top:347px;width:4px;height:1px;background:#8f8f8f;"></div>
<div class="a" style="left:70px;top:360px;width:2px;height:1px;background:#8f8f8f;"></div>
<div class="a" style="left:51px;top:372px;width:21px;height:1px;background:#8f8f8f;"></div>
<div class="a" style="left:70px;top:385px;width:2px;height:1px;background:#8f8f8f;"></div>
<div class="a" style="left:68px;top:397px;width:4px;height:1px;background:#8f8f8f;"></div>
<div class="a" style="left:70px;top:410px;width:2px;height:1px;background:#8f8f8f;"></div>
<div class="a" style="left:51px;top:422px;width:21px;height:1px;background:#8f8f8f;"></div>
<div class="a" style="left:70px;top:435px;width:2px;height:1px;background:#8f8f8f;"></div>
<div class="a" style="left:68px;top:447px;width:4px;height:1px;background:#8f8f8f;"></div>
<div class="a" style="left:70px;top:460px;width:2px;height:1px;background:#8f8f8f;"></div>
<div class="a" style="left:51px;top:472px;width:21px;height:1px;background:#8f8f8f;"></div>
<div class="a" style="left:70px;top:485px;width:2px;height:1px;background:#8f8f8f;"></div>
<div class="a" style="left:68px;top:497px;width:4px;height:1px;background:#8f8f8f;"></div>
<div class="a" style="left:70px;top:510px;width:2px;height:1px;background:#8f8f8f;"></div>
<div class="a" style="left:51px;top:522px;width:21px;height:1px;background:#8f8f8f;"></div>
<div class="a" style="left:70px;top:535px;width:2px;height:1px;background:#8f8f8f;"></div>
<div class="a" style="left:68px;top:547px;width:4px;height:1px;background:#8f8f8f;"></div>
<div class="a" style="left:70px;top:560px;width:2px;height:1px;background:#8f8f8f;"></div>
<div class="a" style="left:51px;top:572px;width:21px;height:1px;background:#8f8f8f;"></div>
<div class="a" style="left:70px;top:585px;width:2px;height:1px;background:#8f8f8f;"></div>
<div class="a" style="left:68px;top:597px;width:4px;height:1px;background:#8f8f8f;"></div>
<div class="a" style="left:70px;top:610px;width:2px;height:1px;background:#8f8f8f;"></div>
<div class="a" style="left:51px;top:622px;width:21px;height:1px;background:#8f8f8f;"></div>
<div class="a" style="left:70px;top:635px;width:2px;height:1px;background:#8f8f8f;"></div>
<div class="a" style="left:68px;top:647px;width:4px;height:1px;background:#8f8f8f;"></div>
<div class="a" style="left:70px;top:660px;width:2px;height:1px;background:#8f8f8f;"></div>
<div class="a" style="left:51px;top:672px;width:21px;height:1px;background:#8f8f8f;"></div>
<div class="a" style="left:70px;top:685px;width:2px;height:1px;background:#8f8f8f;"></div>
<div class="a" style="left:68px;top:697px;width:4px;height:1px;background:#8f8f8f;"></div>
<div class="a" style="left:70px;top:710px;width:2px;height:1px;background:#8f8f8f;"></div>
<div class="a" style="left:51px;top:722px;width:21px;height:1px;background:#8f8f8f;"></div>
<div class="a" style="left:70px;top:735px;width:2px;height:1px;background:#8f8f8f;"></div>
<div class="a" style="left:68px;top:747px;width:4px;height:1px;background:#8f8f8f;"></div>
<div class="a" style="left:70px;top:760px;width:2px;height:1px;background:#8f8f8f;"></div>
<div class="a" style="left:51px;top:772px;width:21px;height:1px;background:#8f8f8f;"></div>
<div class="a" style="left:70px;top:785px;width:2px;height:1px;background:#8f8f8f;"></div>
<div class="a" style="left:68px;top:797px;width:4px;height:1px;background:#8f8f8f;"></div>
<div class="a" style="left:70px;top:810px;width:2px;height:1px;background:#8f8f8f;"></div>
<div class="a" style="left:51px;top:822px;width:21px;height:1px;background:#8f8f8f;"></div>
<div class="a" style="left:70px;top:835px;width:2px;height:1px;background:#8f8f8f;"></div>
<div class="a" style="left:68px;top:847px;width:4px;height:1px;background:#8f8f8f;"></div>
<div class="a" style="left:70px;top:860px;width:2px;height:1px;background:#8f8f8f;"></div>
<div class="a" style="left:51px;top:872px;width:21px;height:1px;background:#8f8f8f;"></div>
<div class="a" style="left:70px;top:885px;width:2px;height:1px;background:#8f8f8f;"></div>
<div class="a" style="left:68px;top:897px;width:4px;height:1px;background:#8f8f8f;"></div>
<div class="a" style="left:70px;top:910px;width:2px;height:1px;background:#8f8f8f;"></div>
<div class="a" style="left:51px;top:922px;width:21px;height:1px;background:#8f8f8f;"></div>
<div class="a" style="left:70px;top:935px;width:2px;height:1px;background:#8f8f8f;"></div>
<div class="a" style="left:68px;top:947px;width:4px;height:1px;background:#8f8f8f;"></div>
<div class="a" style="left:70px;top:960px;width:2px;height:1px;background:#8f8f8f;"></div>
<div class="a" style="left:51px;top:972px;width:21px;height:1px;background:#8f8f8f;"></div>
<div class="a" style="left:70px;top:985px;width:2px;height:1px;background:#8f8f8f;"></div>
<div class="a" style="left:68px;top:997px;width:4px;height:1px;background:#8f8f8f;"></div>
<div class="a" style="left:51px;top:131px;width:21px;height:867px;overflow:hidden">
<div class="t" style="left:8.3px;top:4.90px;font-size:10.4px;color:#a3a3a3">0</div>
<div class="t" style="left:8.3px;top:15.90px;font-size:10.4px;color:#a3a3a3">0</div>
<div class="t" style="left:8.3px;top:43.90px;font-size:10.4px;color:#a3a3a3">2</div>
<div class="t" style="left:8.3px;top:54.90px;font-size:10.4px;color:#a3a3a3">0</div>
<div class="t" style="left:8.3px;top:65.90px;font-size:10.4px;color:#a3a3a3">0</div>
<div class="t" style="left:8.3px;top:93.90px;font-size:10.4px;color:#a3a3a3">0</div>
<div class="t" style="left:8.3px;top:143.90px;font-size:10.4px;color:#a3a3a3">2</div>
<div class="t" style="left:8.3px;top:154.90px;font-size:10.4px;color:#a3a3a3">0</div>
<div class="t" style="left:8.3px;top:165.90px;font-size:10.4px;color:#a3a3a3">0</div>
<div class="t" style="left:8.3px;top:193.90px;font-size:10.4px;color:#a3a3a3">4</div>
<div class="t" style="left:8.3px;top:204.90px;font-size:10.4px;color:#a3a3a3">0</div>
<div class="t" style="left:8.3px;top:215.90px;font-size:10.4px;color:#a3a3a3">0</div>
<div class="t" style="left:8.3px;top:243.90px;font-size:10.4px;color:#a3a3a3">6</div>
<div class="t" style="left:8.3px;top:254.90px;font-size:10.4px;color:#a3a3a3">0</div>
<div class="t" style="left:8.3px;top:265.90px;font-size:10.4px;color:#a3a3a3">0</div>
<div class="t" style="left:8.3px;top:293.90px;font-size:10.4px;color:#a3a3a3">8</div>
<div class="t" style="left:8.3px;top:304.90px;font-size:10.4px;color:#a3a3a3">0</div>
<div class="t" style="left:8.3px;top:315.90px;font-size:10.4px;color:#a3a3a3">0</div>
<div class="t" style="left:8.3px;top:343.90px;font-size:10.4px;color:#a3a3a3">1</div>
<div class="t" style="left:8.3px;top:354.90px;font-size:10.4px;color:#a3a3a3">0</div>
<div class="t" style="left:8.3px;top:365.90px;font-size:10.4px;color:#a3a3a3">0</div>
<div class="t" style="left:8.3px;top:376.90px;font-size:10.4px;color:#a3a3a3">0</div>
<div class="t" style="left:8.3px;top:393.90px;font-size:10.4px;color:#a3a3a3">1</div>
<div class="t" style="left:8.3px;top:404.90px;font-size:10.4px;color:#a3a3a3">2</div>
<div class="t" style="left:8.3px;top:415.90px;font-size:10.4px;color:#a3a3a3">0</div>
<div class="t" style="left:8.3px;top:426.90px;font-size:10.4px;color:#a3a3a3">0</div>
<div class="t" style="left:8.3px;top:443.90px;font-size:10.4px;color:#a3a3a3">1</div>
<div class="t" style="left:8.3px;top:454.90px;font-size:10.4px;color:#a3a3a3">4</div>
<div class="t" style="left:8.3px;top:465.90px;font-size:10.4px;color:#a3a3a3">0</div>
<div class="t" style="left:8.3px;top:476.90px;font-size:10.4px;color:#a3a3a3">0</div>
<div class="t" style="left:8.3px;top:493.90px;font-size:10.4px;color:#a3a3a3">1</div>
<div class="t" style="left:8.3px;top:504.90px;font-size:10.4px;color:#a3a3a3">6</div>
<div class="t" style="left:8.3px;top:515.90px;font-size:10.4px;color:#a3a3a3">0</div>
<div class="t" style="left:8.3px;top:526.90px;font-size:10.4px;color:#a3a3a3">0</div>
<div class="t" style="left:8.3px;top:543.90px;font-size:10.4px;color:#a3a3a3">1</div>
<div class="t" style="left:8.3px;top:554.90px;font-size:10.4px;color:#a3a3a3">8</div>
<div class="t" style="left:8.3px;top:565.90px;font-size:10.4px;color:#a3a3a3">0</div>
<div class="t" style="left:8.3px;top:576.90px;font-size:10.4px;color:#a3a3a3">0</div>
<div class="t" style="left:8.3px;top:593.90px;font-size:10.4px;color:#a3a3a3">2</div>
<div class="t" style="left:8.3px;top:604.90px;font-size:10.4px;color:#a3a3a3">0</div>
<div class="t" style="left:8.3px;top:615.90px;font-size:10.4px;color:#a3a3a3">0</div>
<div class="t" style="left:8.3px;top:626.90px;font-size:10.4px;color:#a3a3a3">0</div>
<div class="t" style="left:8.3px;top:643.90px;font-size:10.4px;color:#a3a3a3">2</div>
<div class="t" style="left:8.3px;top:654.90px;font-size:10.4px;color:#a3a3a3">2</div>
<div class="t" style="left:8.3px;top:665.90px;font-size:10.4px;color:#a3a3a3">0</div>
<div class="t" style="left:8.3px;top:676.90px;font-size:10.4px;color:#a3a3a3">0</div>
<div class="t" style="left:8.3px;top:693.90px;font-size:10.4px;color:#a3a3a3">2</div>
<div class="t" style="left:8.3px;top:704.90px;font-size:10.4px;color:#a3a3a3">4</div>
<div class="t" style="left:8.3px;top:715.90px;font-size:10.4px;color:#a3a3a3">0</div>
<div class="t" style="left:8.3px;top:726.90px;font-size:10.4px;color:#a3a3a3">0</div>
<div class="t" style="left:8.3px;top:743.90px;font-size:10.4px;color:#a3a3a3">2</div>
<div class="t" style="left:8.3px;top:754.90px;font-size:10.4px;color:#a3a3a3">6</div>
<div class="t" style="left:8.3px;top:765.90px;font-size:10.4px;color:#a3a3a3">0</div>
<div class="t" style="left:8.3px;top:776.90px;font-size:10.4px;color:#a3a3a3">0</div>
<div class="t" style="left:8.3px;top:793.90px;font-size:10.4px;color:#a3a3a3">2</div>
<div class="t" style="left:8.3px;top:804.90px;font-size:10.4px;color:#a3a3a3">8</div>
<div class="t" style="left:8.3px;top:815.90px;font-size:10.4px;color:#a3a3a3">0</div>
<div class="t" style="left:8.3px;top:826.90px;font-size:10.4px;color:#a3a3a3">0</div>
<div class="t" style="left:8.3px;top:843.90px;font-size:10.4px;color:#a3a3a3">3</div>
<div class="t" style="left:8.3px;top:854.90px;font-size:10.4px;color:#a3a3a3">0</div>
<div class="t" style="left:8.3px;top:865.90px;font-size:10.4px;color:#a3a3a3">0</div>
<div class="t" style="left:8.3px;top:876.90px;font-size:10.4px;color:#a3a3a3">0</div>
</div>
<svg style="left:51px;top:110px;" width="21" height="21" viewBox="0 0 21 21"><rect x="1.0" y="14" width="1.2" height="1.2" fill="#7a7a7a"/><rect x="3.5" y="14" width="1.2" height="1.2" fill="#7a7a7a"/><rect x="6.0" y="14" width="1.2" height="1.2" fill="#7a7a7a"/><rect x="8.5" y="14" width="1.2" height="1.2" fill="#7a7a7a"/><rect x="11.0" y="14" width="1.2" height="1.2" fill="#7a7a7a"/><rect x="13.5" y="14" width="1.2" height="1.2" fill="#7a7a7a"/><rect x="16.0" y="14" width="1.2" height="1.2" fill="#7a7a7a"/><rect x="15" y="1.0" width="1.2" height="1.2" fill="#7a7a7a"/><rect x="15" y="3.5" width="1.2" height="1.2" fill="#7a7a7a"/><rect x="15" y="6.0" width="1.2" height="1.2" fill="#7a7a7a"/><rect x="15" y="8.5" width="1.2" height="1.2" fill="#7a7a7a"/><rect x="15" y="11.0" width="1.2" height="1.2" fill="#7a7a7a"/><rect x="15" y="13.5" width="1.2" height="1.2" fill="#7a7a7a"/><rect x="15" y="16.0" width="1.2" height="1.2" fill="#7a7a7a"/><rect x="15" y="18.5" width="1.2" height="1.2" fill="#7a7a7a"/><circle cx="15.5" cy="14.5" r="1.5" fill="none" stroke="#7a7a7a" stroke-width="0.8"/></svg>
<div class="a" style="left:72px;top:131px;width:1396px;height:867px;background:#1b1b1b;"></div>
<div class="a" style="left:1468px;top:110px;width:20px;height:888px;background:#2a2a2a;"></div>
<div class="a" style="left:1471px;top:385px;width:14px;height:338px;background:#484848;border-radius:1px"></div>
<svg style="left:1474.5px;top:120px;" width="9" height="5" viewBox="0 0 9 5"><path d="M0.5 4.5 L4.5 0.5 L8.5 4.5" fill="none" stroke="#9a9a9a" stroke-width="1.1"/></svg>
<svg style="left:1474px;top:983px;" width="9" height="5" viewBox="0 0 9 5"><path d="M0.5 0.5 L4.5 4.5 L8.5 0.5" fill="none" stroke="#9a9a9a" stroke-width="1.1"/></svg>
<div class="a" style="left:51px;top:998px;width:1437px;height:21px;background:#2a2a2a;"></div>
<div class="a" style="left:51px;top:1019px;width:1437px;height:1px;background:#1e1e1e;"></div>
<div class="a" style="left:111px;top:998px;width:229px;height:21px;background:#303030;"></div>
<div class="t" style="left:67px;top:1001.54px;font-size:12px;color:#e2e2e2;font-weight:normal;">25%</div>
<div class="t" style="left:148.5px;top:1001.84px;font-size:12px;color:#b4b4b4;font-weight:normal;letter-spacing:-0.25px">3648 px x 2736 px (72 ppi)</div>
<svg style="left:328px;top:1004px;" width="6" height="10" viewBox="0 0 6 10"><path d="M0.5 0.5 L5 5 L0.5 9.5" fill="none" stroke="#a0a0a0" stroke-width="1.1"/></svg>
<svg style="left:351.5px;top:1004.5px;" width="5" height="9" viewBox="0 0 5 9"><path d="M4.5 0.5 L0.5 4.5 L4.5 8.5" fill="none" stroke="#a0a0a0" stroke-width="1.1"/></svg>
<div class="a" style="left:685px;top:1002px;width:439px;height:13px;background:#484848;border-radius:3px"></div>
<svg style="left:1453.5px;top:1005px;" width="5" height="9" viewBox="0 0 5 9"><path d="M0.5 0.5 L4.5 4.5 L0.5 8.5" fill="none" stroke="#a0a0a0" stroke-width="1.1"/></svg>
<div class="a" style="left:1468px;top:998px;width:20px;height:21px;background:#2e2e2e;"></div>
<div class="a" style="left:314px;top:223px;width:911px;height:684px;background:#ffffff;border:1px solid #4b8cf5"></div>
<div class="a" style="left:1225px;top:224px;width:1px;height:682px;background:#f4f6fa;"></div>
<div class="a" style="left:309.0px;top:218.0px;width:11px;height:11px;background:#f3f3f3;border:1.5px solid #4b8cf5"></div>
<div class="a" style="left:309.0px;top:559.0px;width:11px;height:11px;background:#f3f3f3;border:1.5px solid #4b8cf5"></div>
<div class="a" style="left:309.0px;top:900.0px;width:11px;height:11px;background:#f3f3f3;border:1.5px solid #4b8cf5"></div>
<div class="a" style="left:764.0px;top:218.0px;width:11px;height:11px;background:#f3f3f3;border:1.5px solid #4b8cf5"></div>
<div class="a" style="left:764.0px;top:900.0px;width:11px;height:11px;background:#f3f3f3;border:1.5px solid #4b8cf5"></div>
<div class="a" style="left:1219.0px;top:218.0px;width:11px;height:11px;background:#f3f3f3;border:1.5px solid #4b8cf5"></div>
<div class="a" style="left:1219.0px;top:559.0px;width:11px;height:11px;background:#f3f3f3;border:1.5px solid #4b8cf5"></div>
<div class="a" style="left:1219.0px;top:900.0px;width:11px;height:11px;background:#f3f3f3;border:1.5px solid #4b8cf5"></div>
<div class="a" style="left:1488px;top:73px;width:3px;height:947px;background:#262626;"></div>
<div class="a" style="left:1491px;top:73px;width:47px;height:16px;background:#262626;"></div>
<svg style="left:1523px;top:79px;" width="8" height="5" viewBox="0 0 8 5"><path d="M3.2 0.5 L0.7 2.5 L3.2 4.5 M7.5 0.5 L5 2.5 L7.5 4.5" fill="none" stroke="#d0d0d0" stroke-width="1.3"/></svg>
<div class="a" style="left:1491px;top:89px;width:47px;height:50px;background:#323232;"></div>
<div class="a" style="left:1491px;top:140px;width:47px;height:50px;background:#323232;"></div>
<div class="a" style="left:1491px;top:192px;width:47px;height:828px;background:#323232;"></div>
<svg style="left:1502px;top:93px;" width="25" height="5" viewBox="0 0 25 5"><rect x="0.0" y="0" width="1.2" height="4.8" fill="#1f1f1f"/><rect x="2.2" y="0" width="1.2" height="4.8" fill="#1f1f1f"/><rect x="4.4" y="0" width="1.2" height="4.8" fill="#1f1f1f"/><rect x="6.6000000000000005" y="0" width="1.2" height="4.8" fill="#1f1f1f"/><rect x="8.8" y="0" width="1.2" height="4.8" fill="#1f1f1f"/><rect x="11.0" y="0" width="1.2" height="4.8" fill="#1f1f1f"/><rect x="13.200000000000001" y="0" width="1.2" height="4.8" fill="#1f1f1f"/><rect x="15.400000000000002" y="0" width="1.2" height="4.8" fill="#1f1f1f"/><rect x="17.6" y="0" width="1.2" height="4.8" fill="#1f1f1f"/><rect x="19.8" y="0" width="1.2" height="4.8" fill="#1f1f1f"/><rect x="22.0" y="0" width="1.2" height="4.8" fill="#1f1f1f"/></svg>
<svg style="left:1502px;top:145px;" width="25" height="5" viewBox="0 0 25 5"><rect x="0.0" y="0" width="1.2" height="4.8" fill="#1f1f1f"/><rect x="2.2" y="0" width="1.2" height="4.8" fill="#1f1f1f"/><rect x="4.4" y="0" width="1.2" height="4.8" fill="#1f1f1f"/><rect x="6.6000000000000005" y="0" width="1.2" height="4.8" fill="#1f1f1f"/><rect x="8.8" y="0" width="1.2" height="4.8" fill="#1f1f1f"/><rect x="11.0" y="0" width="1.2" height="4.8" fill="#1f1f1f"/><rect x="13.200000000000001" y="0" width="1.2" height="4.8" fill="#1f1f1f"/><rect x="15.400000000000002" y="0" width="1.2" height="4.8" fill="#1f1f1f"/><rect x="17.6" y="0" width="1.2" height="4.8" fill="#1f1f1f"/><rect x="19.8" y="0" width="1.2" height="4.8" fill="#1f1f1f"/><rect x="22.0" y="0" width="1.2" height="4.8" fill="#1f1f1f"/></svg>
<svg style="left:1505px;top:108px;" width="19" height="20" viewBox="0 0 19 20"><path d="M3.5 7.5 C0.5 7 0 3 3 1.8 C5.5 0.8 9 1.5 12 1 C14 0.7 15.5 0.3 17 0" fill="none" stroke="#d8d8d8" stroke-width="1.6"/><path d="M3 6.5 C4.5 5.5 4.5 4 3.5 3" fill="none" stroke="#d8d8d8" stroke-width="1.8"/><path d="M17 0 L15.5 0.5 L3 18.5 L5 18.5 L16.5 2.5 Z" fill="#d8d8d8"/><path d="M0.5 18.5 C2 17.8 5 17.8 7.5 18.5" fill="none" stroke="#d8d8d8" stroke-width="1.5"/><path d="M17 0 L16 16.5 C16 18.5 17.5 19.5 19 18" fill="none" stroke="#d8d8d8" stroke-width="1.8"/><path d="M7.5 13 H16.5" stroke="#d8d8d8" stroke-width="1.4"/></svg>
<svg style="left:1504px;top:157px;" width="21" height="23" viewBox="0 0 21 23"><path d="M10.5 1 L20 6 L10.5 11 L1 6 Z" fill="#555"/><path d="M1 6 L10.5 11 L10.5 22 L1 17 Z" fill="#7a7a7a"/><path d="M10.5 11 L20 6 L20 17 L10.5 22 Z" fill="#333"/><path d="M10.5 1 L20 6 L20 17 L10.5 22 L1 17 L1 6 Z M1 6 L10.5 11 L20 6 M10.5 11 V22" fill="none" stroke="#dcdcdc" stroke-width="1.3" stroke-linejoin="round"/></svg>
<div class="a" style="left:1541px;top:73px;width:379px;height:16px;background:#262626;"></div>
<svg style="left:1903px;top:79px;" width="8" height="5" viewBox="0 0 8 5"><path d="M0.5 0.5 L3 2.5 L0.5 4.5 M4.8 0.5 L7.3 2.5 L4.8 4.5" fill="none" stroke="#d0d0d0" stroke-width="1.3"/></svg>
<div class="a" style="left:1541px;top:89px;width:378px;height:34px;background:#282828;"></div>
<div class="a" style="left:1541px;top:89px;width:53px;height:35px;background:#323232;"></div>
<div class="a" style="left:1669px;top:89px;width:1px;height:34px;background:#2a2a2a;"></div>
<div class="a" style="left:1749px;top:89px;width:1px;height:34px;background:#2a2a2a;"></div>
<div class="a" style="left:1819px;top:89px;width:1px;height:34px;background:#2a2a2a;"></div>
<div class="t" style="left:1552.5px;top:99.17px;font-size:12.2px;color:#eaeaea;font-weight:bold;">Color</div>
<div class="t" style="left:1604.5px;top:99.17px;font-size:12.2px;color:#8e8e8e;font-weight:bold;">Swatches</div>
<div class="t" style="left:1681px;top:99.17px;font-size:12.2px;color:#8e8e8e;font-weight:bold;">Gradients</div>
<div class="t" style="left:1760px;top:99.17px;font-size:12.2px;color:#8e8e8e;font-weight:bold;">Patterns</div>
<svg style="left:1903px;top:102px;" width="11" height="8" viewBox="0 0 11 8"><rect x="0" y="0" width="10.5" height="1" fill="#a0a0a0"/><rect x="0" y="2" width="10.5" height="1" fill="#a0a0a0"/><rect x="0" y="4" width="10.5" height="1" fill="#a0a0a0"/><rect x="0" y="6" width="10.5" height="1" fill="#a0a0a0"/></svg>
<div class="a" style="left:1541px;top:123px;width:378px;height:131px;background:#323232;"></div>
<div class="a" style="left:1566px;top:150px;width:22px;height:22px;background:#e0404f;border:1.5px solid #fafafa;outline:1px solid #111"></div>
<div class="a" style="left:1551px;top:135px;width:28px;height:28px;background:#707070;"></div>
<div class="a" style="left:1554px;top:138px;width:22px;height:22px;background:#e82020;border:1.5px solid #fafafa;outline:1px solid #111"></div>
<div class="a" style="left:1597px;top:132px;width:257px;height:95px;background:linear-gradient(to bottom,rgba(0,0,0,0),#000),linear-gradient(to right,#fff,#f00)"></div>
<svg style="left:1809.5px;top:133px;" width="15" height="15" viewBox="0 0 15 15"><circle cx="7.3" cy="7" r="6.6" fill="none" stroke="#fff" stroke-width="1.2"/></svg>
<div class="a" style="left:1875px;top:132px;width:24px;height:95px;background:linear-gradient(to bottom,#f00 0%,#f0f 16.7%,#00f 33.3%,#0ff 50%,#0f0 66.7%,#ff0 83.3%,#f00 100%)"></div>
<svg style="left:1864px;top:223px;" width="10" height="10" viewBox="0 0 10 10"><path d="M1.5 1 C1.5 0 2.5 -0.3 3.5 0.3 L9 4.2 C9.8 4.7 9.8 5.3 9 5.8 L3.5 9.7 C2.5 10.3 1.5 10 1.5 9 Z" fill="#e6e6e6"/></svg>
<div class="a" style="left:1919px;top:89px;width:1px;height:931px;background:#262626;"></div>
<div class="a" style="left:1541px;top:258px;width:378px;height:34px;background:#282828;"></div>
<div class="a" style="left:1541px;top:258px;width:83px;height:35px;background:#323232;"></div>
<div class="a" style="left:1719px;top:258px;width:1px;height:34px;background:#2a2a2a;"></div>
<div class="t" style="left:1552px;top:267.09px;font-size:12.3px;color:#eaeaea;font-weight:bold;">Properties</div>
<div class="t" style="left:1634.5px;top:267.09px;font-size:12.3px;color:#8e8e8e;font-weight:bold;">Adjustments</div>
<svg style="left:1903px;top:271px;" width="11" height="8" viewBox="0 0 11 8"><rect x="0" y="0" width="10.5" height="1" fill="#a0a0a0"/><rect x="0" y="2" width="10.5" height="1" fill="#a0a0a0"/><rect x="0" y="4" width="10.5" height="1" fill="#a0a0a0"/><rect x="0" y="6" width="10.5" height="1" fill="#a0a0a0"/></svg>
<div class="a" style="left:1541px;top:292px;width:378px;height:272px;background:#323232;"></div>
<div class="a" style="left:1555px;top:300px;width:27px;height:28px;background:#262626;border-radius:2px"></div>
<svg style="left:1559px;top:307px;" width="19" height="16" viewBox="0 0 19 16"><rect x="1" y="1" width="17" height="14" fill="none" stroke="#dcdcdc" stroke-width="1.6"/><path d="M2 14 L2 10 L4 10 L4 8 L6 8 L6 6 L9 6 L9 8 L11 8 L11 10 L13 10 L13 12 L17 12 L17 14 Z" fill="#dcdcdc"/><rect x="13" y="3.5" width="2.5" height="2.5" fill="#dcdcdc"/></svg>
<div class="t" style="left:1590px;top:310.00px;font-size:12.4px;color:#c4c4c4;font-weight:normal;">Pixel Layer</div>
<div class="a" style="left:1541px;top:334px;width:378px;height:1px;background:#282828;"></div>
<div class="a" style="left:1899px;top:336px;width:20px;height:196px;background:#2a2a2a;"></div>
<svg style="left:1906px;top:346px;" width="9" height="5" viewBox="0 0 9 5"><path d="M0.5 4.5 L4.5 0.5 L8.5 4.5" fill="none" stroke="#9a9a9a" stroke-width="1"/></svg>
<div class="a" style="left:1902px;top:357px;width:13px;height:69px;background:#484848;border-radius:2px"></div>
<svg style="left:1906px;top:517.5px;" width="9" height="5" viewBox="0 0 9 5"><path d="M0.5 0.5 L4.5 4.5 L8.5 0.5" fill="none" stroke="#9a9a9a" stroke-width="1"/></svg>
<svg style="left:1550px;top:350px;" width="11" height="6" viewBox="0 0 11 6"><path d="M0.5 0.5 L5.3 5.3 L10.2 0.5" fill="none" stroke="#bdbdbd" stroke-width="1.1"/></svg>
<div class="t" style="left:1572px;top:347.16px;font-size:12.8px;color:#e6e6e6;font-weight:bold;">Transform</div>
<div class="a" style="left:1553px;top:384px;width:30px;height:32px;background:#262626;border-radius:2px"></div>
<svg style="left:1562px;top:391px;" width="10" height="18" viewBox="0 0 10 18"><rect x="1" y="1" width="7.5" height="8" rx="3.7" fill="none" stroke="#e0e0e0" stroke-width="1.7"/><rect x="1" y="8.5" width="7.5" height="8" rx="3.7" fill="none" stroke="#e0e0e0" stroke-width="1.7"/><rect x="4" y="5" width="1.5" height="8" fill="#e0e0e0"/></svg>
<div class="t" style="left:1597px;top:377.42px;font-size:12.5px;color:#9c9c9c;font-weight:normal;">W</div>
<div class="a" style="left:1614px;top:373px;width:61px;height:21px;background:#262626;border:1px solid #3d3d3d"></div>
<div class="t" style="left:1619px;top:377.42px;font-size:12.5px;color:#e6e6e6;font-weight:normal;">3648 px</div>
<div class="t" style="left:1600px;top:408.42px;font-size:12.5px;color:#9c9c9c;font-weight:normal;">H</div>
<div class="a" style="left:1614px;top:404px;width:61px;height:21px;background:#262626;border:1px solid #3d3d3d"></div>
<div class="t" style="left:1619px;top:408.42px;font-size:12.5px;color:#e6e6e6;font-weight:normal;">2736 px</div>
<div class="t" style="left:1707px;top:377.42px;font-size:12.5px;color:#9c9c9c;font-weight:normal;">X</div>
<div class="a" style="left:1723px;top:373px;width:61px;height:21px;background:#262626;border:1px solid #3d3d3d"></div>
<div class="t" style="left:1728px;top:377.42px;font-size:12.5px;color:#e6e6e6;font-weight:normal;">0 px</div>
<div class="t" style="left:1707.5px;top:408.42px;font-size:12.5px;color:#9c9c9c;font-weight:normal;">Y</div>
<div class="a" style="left:1723px;top:404px;width:61px;height:21px;background:#262626;border:1px solid #3d3d3d"></div>
<div class="t" style="left:1728px;top:408.42px;font-size:12.5px;color:#e6e6e6;font-weight:normal;">0 px</div>
<svg style="left:1592px;top:444px;" width="17" height="13" viewBox="0 0 17 13"><path d="M0.5 12 H16 M1 11.5 L13 1 M10 5 C12 7 12.5 9 12.5 12" fill="none" stroke="#d0d0d0" stroke-width="1.2"/></svg>
<div class="a" style="left:1616px;top:441px;width:62px;height:20px;background:#262626;border:1px solid #3d3d3d;border-radius:2px"></div>
<div class="a" style="left:1659px;top:442px;width:1px;height:19px;background:#3d3d3d;"></div>
<div class="t" style="left:1619.5px;top:445.42px;font-size:12.5px;color:#e6e6e6;font-weight:normal;">0.00°</div>
<svg style="left:1665px;top:451px;" width="9" height="5" viewBox="0 0 9 5"><path d="M0.5 0.5 L4.5 4.5 L8.5 0.5" fill="none" stroke="#bdbdbd" stroke-width="1"/></svg>
<svg style="left:1723px;top:443px;" width="21" height="16" viewBox="0 0 21 16"><path d="M1 1.5 L8 8 L1 14.5 Z" fill="none" stroke="#d0d0d0" stroke-width="1.2"/><path d="M20 1.5 L13 8 L20 14.5 Z" fill="#d0d0d0"/><path d="M10.5 0 V16" stroke="#d0d0d0" stroke-width="1" stroke-dasharray="1.3 1.3"/></svg>
<svg style="left:1760px;top:441px;" width="18" height="20" viewBox="0 0 18 20"><path d="M2 1 H16 L9 7 Z" fill="none" stroke="#d0d0d0" stroke-width="1.2"/><path d="M2 19.5 H16 L9 13 Z" fill="#d0d0d0"/><path d="M0 10 H18" stroke="#d0d0d0" stroke-width="1" stroke-dasharray="1.3 1.3"/></svg>
<div class="a" style="left:1541px;top:480px;width:358px;height:1px;background:#282828;"></div>
<svg style="left:1550px;top:496px;" width="11" height="6" viewBox="0 0 11 6"><path d="M0.5 0.5 L5.3 5.3 L10.2 0.5" fill="none" stroke="#bdbdbd" stroke-width="1.1"/></svg>
<div class="t" style="left:1571px;top:493.00px;font-size:13px;color:#e6e6e6;font-weight:bold;">Align and Distribute</div>
<div class="a" style="left:1541px;top:518px;width:200px;height:14.5px;overflow:hidden">
<div class="t" style="left:12px;top:3.39px;font-size:12.3px;color:#a8a8a8">Align:</div>
</div>
<div class="a" style="left:1541px;top:568px;width:378px;height:33px;background:#282828;"></div>
<div class="a" style="left:1541px;top:568px;width:60px;height:34px;background:#323232;"></div>
<div class="a" style="left:1675px;top:568px;width:1px;height:33px;background:#2a2a2a;"></div>
<div class="a" style="left:1729px;top:568px;width:1px;height:33px;background:#2a2a2a;"></div>
<div class="t" style="left:1552px;top:577.39px;font-size:12.3px;color:#eaeaea;font-weight:bold;">Layers</div>
<div class="t" style="left:1611px;top:577.39px;font-size:12.3px;color:#8e8e8e;font-weight:bold;">Channels</div>
<div class="t" style="left:1686.5px;top:577.39px;font-size:12.3px;color:#8e8e8e;font-weight:bold;">Paths</div>
<svg style="left:1903px;top:581px;" width="11" height="8" viewBox="0 0 11 8"><rect x="0" y="0" width="10.5" height="1" fill="#a0a0a0"/><rect x="0" y="2" width="10.5" height="1" fill="#a0a0a0"/><rect x="0" y="4" width="10.5" height="1" fill="#a0a0a0"/><rect x="0" y="6" width="10.5" height="1" fill="#a0a0a0"/></svg>
<div class="a" style="left:1541px;top:601px;width:378px;height:419px;background:#323232;"></div>
<div class="a" style="left:1545.5px;top:614px;width:108px;height:24px;background:#262626;border:1px solid #3a3a3a;border-radius:3px"></div>
<svg style="left:1555px;top:621px;" width="14" height="12" viewBox="0 0 14 12"><circle cx="5" cy="5" r="4" fill="none" stroke="#dcdcdc" stroke-width="1.6"/><path d="M8 8 L12.5 11.5" stroke="#dcdcdc" stroke-width="2"/></svg>
<div class="t" style="left:1573px;top:619.42px;font-size:12.5px;color:#e6e6e6;font-weight:normal;">Kind</div>
<svg style="left:1641px;top:624.5px;" width="9" height="5" viewBox="0 0 9 5"><path d="M0.5 0.5 L4.5 4.5 L8.5 0.5" fill="none" stroke="#bdbdbd" stroke-width="1"/></svg>
<svg style="left:1669.5px;top:619.5px;" width="15" height="12" viewBox="0 0 15 12"><rect x="0.7" y="0.7" width="13.6" height="10.6" fill="none" stroke="#d0d0d0" stroke-width="1.3"/><path d="M2.5 9.5 L5.5 5 L7.5 7 L9.5 4.5 L12.5 9.5 Z" fill="#d0d0d0"/></svg>
<svg style="left:1700px;top:618px;" width="13" height="13" viewBox="0 0 13 13"><circle cx="6.5" cy="6.5" r="5.8" fill="none" stroke="#d0d0d0" stroke-width="1.3"/><path d="M10.6 2.4 A5.8 5.8 0 0 1 2.4 10.6 Z" fill="#d0d0d0"/></svg>
<svg style="left:1731px;top:619px;" width="13" height="13" viewBox="0 0 13 13"><path d="M0.8 3.5 V1 H12.2 V3.5 M6.5 1 V12 M4 12 H9" fill="none" stroke="#d0d0d0" stroke-width="2"/></svg>
<svg style="left:1760px;top:618px;" width="15" height="15" viewBox="0 0 15 15"><rect x="2" y="2" width="11" height="11" fill="none" stroke="#d0d0d0" stroke-width="1.2"/><rect x="0.3" y="0.3" width="3.5" height="3.5" fill="#323232" stroke="#d0d0d0" stroke-width="1"/><rect x="0.3" y="11.2" width="3.5" height="3.5" fill="#323232" stroke="#d0d0d0" stroke-width="1"/><rect x="11.2" y="0.3" width="3.5" height="3.5" fill="#323232" stroke="#d0d0d0" stroke-width="1"/><rect x="11.2" y="11.2" width="3.5" height="3.5" fill="#323232" stroke="#d0d0d0" stroke-width="1"/></svg>
<svg style="left:1791px;top:618px;" width="14" height="15" viewBox="0 0 14 15"><path d="M5 1 H10 L13 4 V12 H5 Z" fill="none" stroke="#d0d0d0" stroke-width="1.3"/><rect x="0.5" y="7" width="7" height="7" fill="#d0d0d0"/></svg>
<div class="a" style="left:1819px;top:614px;width:11px;height:22px;border:1px solid #3a3a3a;border-radius:6px;background:#2a2a2a"></div>
<div class="a" style="left:1819px;top:614px;width:11px;height:11px;border-radius:6px;background:#dcdcdc"></div>
<div class="a" style="left:1541px;top:641px;width:378px;height:1px;background:#282828;"></div>
<div class="a" style="left:1545.5px;top:649.5px;width:166px;height:23px;background:#262626;border:1px solid #3a3a3a;border-radius:3px"></div>
<div class="t" style="left:1556px;top:654.30px;font-size:12.4px;color:#e6e6e6;font-weight:normal;">Divide</div>
<svg style="left:1700px;top:659.5px;" width="9" height="5" viewBox="0 0 9 5"><path d="M0.5 0.5 L4.5 4.5 L8.5 0.5" fill="none" stroke="#bdbdbd" stroke-width="1"/></svg>
<div class="t" style="left:1719.5px;top:655.02px;font-size:12.5px;color:#b4b4b4;font-weight:normal;">Opacity:</div>
<div class="a" style="left:1771px;top:650px;width:58px;height:20px;background:#262626;border:1px solid #424242;border-radius:3px"></div>
<div class="a" style="left:1810px;top:651px;width:1px;height:19px;background:#424242;"></div>
<div class="t" style="left:1775px;top:653.33px;font-size:12.6px;color:#e6e6e6;font-weight:normal;">100%</div>
<svg style="left:1816px;top:659.5px;" width="9" height="5" viewBox="0 0 9 5"><path d="M0.5 0.5 L4.5 4.5 L8.5 0.5" fill="none" stroke="#bdbdbd" stroke-width="1"/></svg>
<div class="a" style="left:1541px;top:676px;width:378px;height:1px;background:#282828;"></div>
<div class="t" style="left:1549px;top:689.09px;font-size:12.3px;color:#b4b4b4;font-weight:normal;">Lock:</div>
<svg style="left:1590px;top:688px;" width="14" height="14" viewBox="0 0 14 14"><rect x="0" y="0" width="14" height="14" fill="#d0d0d0"/><rect x="1.5" y="1.5" width="3.7" height="3.7" fill="#2a2a2a"/><rect x="1.5" y="8.9" width="3.7" height="3.7" fill="#2a2a2a"/><rect x="5.2" y="5.2" width="3.7" height="3.7" fill="#2a2a2a"/><rect x="8.9" y="1.5" width="3.7" height="3.7" fill="#2a2a2a"/><rect x="8.9" y="8.9" width="3.7" height="3.7" fill="#2a2a2a"/></svg>
<svg style="left:1618px;top:687px;" width="16" height="18" viewBox="0 0 16 18"><path d="M15.2 0.8 C15.6 1.2 15.4 2 15 2.5 L9.5 9.8 L7.2 7.6 L13.5 1 C14 0.5 14.8 0.4 15.2 0.8 Z" fill="#d0d0d0"/><path d="M6.5 8.3 L9 10.6 C8.8 13 7.3 15.3 4.8 16.3 C3.3 16.9 1.8 17 0.5 17.2 C1.6 15.8 2 14.3 2.6 12.6 C3.3 10.3 4.6 8.8 6.5 8.3 Z" fill="#d0d0d0"/></svg>
<svg style="left:1643.5px;top:687px;" width="16" height="17" viewBox="0 0 16 17"><path d="M8 2 V15 M2 8.5 H14" stroke="#d0d0d0" stroke-width="1.7"/><path d="M8 0 L12 4.3 L4 4.3 Z M8 17 L12 12.7 L4 12.7 Z M0 8.5 L4.3 4.5 L4.3 12.5 Z M16 8.5 L11.7 4.5 L11.7 12.5 Z" fill="#d0d0d0"/></svg>
<svg style="left:1669.5px;top:687px;" width="18" height="17" viewBox="0 0 18 17"><path d="M3.5 3 V13.5 H14.5 V7 L10.5 3 Z" fill="none" stroke="#d0d0d0" stroke-width="1.4"/><path d="M10.5 3 V7 H14.5" fill="none" stroke="#d0d0d0" stroke-width="1.1"/><path d="M0.5 3 H3 M0.5 13.5 H3 M15 13.5 H17.5 M3.5 0.5 V2.5 M3.5 14 V16.5 M14.5 14 V16.5" stroke="#d0d0d0" stroke-width="1.1"/><circle cx="16" cy="1.5" r="0.9" fill="#d0d0d0"/></svg>
<svg style="left:1700px;top:687px;" width="14" height="16" viewBox="0 0 14 16"><path d="M3.5 7 V4.8 C3.5 2.3 5 1 7 1 C9 1 10.5 2.3 10.5 4.8 V7" fill="none" stroke="#d0d0d0" stroke-width="1.8"/><rect x="0.8" y="6.5" width="12.4" height="9" rx="1" fill="#d0d0d0"/><circle cx="7" cy="10.8" r="1.5" fill="#323232"/></svg>
<div class="t" style="left:1747px;top:689.59px;font-size:12.3px;color:#b4b4b4;font-weight:normal;">Fill:</div>
<div class="a" style="left:1771px;top:685px;width:58px;height:20px;background:#262626;border:1px solid #424242;border-radius:3px"></div>
<div class="a" style="left:1810px;top:686px;width:1px;height:19px;background:#424242;"></div>
<div class="t" style="left:1775px;top:688.33px;font-size:12.6px;color:#e6e6e6;font-weight:normal;">100%</div>
<svg style="left:1816px;top:694.5px;" width="9" height="5" viewBox="0 0 9 5"><path d="M0.5 0.5 L4.5 4.5 L8.5 0.5" fill="none" stroke="#bdbdbd" stroke-width="1"/></svg>
<div class="a" style="left:1541px;top:710px;width:378px;height:279px;background:#2b2b2b;"></div>
<div class="a" style="left:1541px;top:711px;width:358px;height:44px;background:#2f2f2f;"></div>
<div class="a" style="left:1579px;top:715px;width:320px;height:40px;background:#4a4a4a;"></div>
<div class="a" style="left:1541px;top:755px;width:358px;height:1px;background:#262626;"></div>
<div class="a" style="left:1579px;top:756px;width:320px;height:1px;background:#3c3c3c;"></div>
<div class="a" style="left:1541px;top:757px;width:358px;height:42px;background:#303030;"></div>
<div class="a" style="left:1578px;top:711px;width:1px;height:88px;background:#2a2a2a;"></div>
<svg style="left:1552px;top:732px;" width="15" height="10" viewBox="0 0 15 10"><path d="M0.5 5 C3 1.5 5.5 0.5 7.5 0.5 C9.5 0.5 12 1.5 14.5 5 C12 8.5 9.5 9.5 7.5 9.5 C5.5 9.5 3 8.5 0.5 5 Z" fill="#e0e0e0"/><circle cx="7.5" cy="5" r="2.6" fill="#333"/><circle cx="7" cy="4.5" r="0.9" fill="#e0e0e0"/></svg>
<svg style="left:1552px;top:773.5px;" width="15" height="10" viewBox="0 0 15 10"><path d="M0.5 5 C3 1.5 5.5 0.5 7.5 0.5 C9.5 0.5 12 1.5 14.5 5 C12 8.5 9.5 9.5 7.5 9.5 C5.5 9.5 3 8.5 0.5 5 Z" fill="#e0e0e0"/><circle cx="7.5" cy="5" r="2.6" fill="#333"/><circle cx="7" cy="4.5" r="0.9" fill="#e0e0e0"/></svg>
<svg style="left:1583.2px;top:721.0px;" width="40.5" height="30.5" viewBox="0 0 40.5 30.5"><rect x="0" y="0" width="40.0" height="30.5" fill="#363636"/></svg>
<svg style="left:1584.7px;top:722.5px;" width="37.5" height="28.5" viewBox="0 0 37.5 28.5"><defs><linearGradient id="g722.5" x1="0" y1="0" x2="1" y2="1"><stop offset="0" stop-color="#b9b9b9"/><stop offset="0.45" stop-color="#bdbdbd"/><stop offset="1" stop-color="#8a8a8a"/></linearGradient></defs><rect width="37.5" height="28.5" fill="url(#g722.5)"/><path d="M21.8 0 V28.5" stroke="#a9a9a9" stroke-width="0.5"/><circle cx="4.6" cy="13.6" r="0.77" fill="#1e1e1e"/><circle cx="4.8" cy="13.1" r="0.61" fill="#1e1e1e"/><circle cx="10.7" cy="16.6" r="0.63" fill="#1e1e1e"/><circle cx="9.4" cy="10.2" r="0.49" fill="#1e1e1e"/><circle cx="14.5" cy="16.1" r="0.66" fill="#1e1e1e"/><circle cx="18.9" cy="15.1" r="0.78" fill="#1e1e1e"/><circle cx="6.2" cy="7.2" r="0.42" fill="#1e1e1e"/><circle cx="13.4" cy="12.5" r="0.38" fill="#1e1e1e"/><circle cx="10.0" cy="14.9" r="0.36" fill="#1e1e1e"/><circle cx="5.2" cy="13.0" r="0.73" fill="#1e1e1e"/><circle cx="3.9" cy="11.3" r="0.57" fill="#1e1e1e"/><circle cx="6.9" cy="8.0" r="0.48" fill="#1e1e1e"/><circle cx="20.9" cy="11.8" r="0.73" fill="#1e1e1e"/><circle cx="8.2" cy="8.5" r="0.45" fill="#1e1e1e"/><circle cx="23.7" cy="11.6" r="0.69" fill="#1e1e1e"/><circle cx="18.4" cy="14.8" r="0.52" fill="#1e1e1e"/><circle cx="30.7" cy="7.9" r="0.35" fill="#1e1e1e"/><circle cx="26.0" cy="18.9" r="0.56" fill="#1e1e1e"/><circle cx="27.6" cy="9.5" r="0.38" fill="#1e1e1e"/><circle cx="19.7" cy="4.7" r="0.47" fill="#1e1e1e"/><circle cx="26.8" cy="12.0" r="0.78" fill="#1e1e1e"/><circle cx="24.1" cy="7.9" r="0.46" fill="#1e1e1e"/><circle cx="25.0" cy="10.9" r="0.71" fill="#1e1e1e"/><circle cx="26.0" cy="14.8" r="0.55" fill="#1e1e1e"/><circle cx="26.1" cy="16.3" r="0.41" fill="#1e1e1e"/><circle cx="22.9" cy="8.4" r="0.54" fill="#1e1e1e"/><circle cx="31.3" cy="18.6" r="0.79" fill="#1e1e1e"/><circle cx="31.5" cy="15.3" r="0.75" fill="#1e1e1e"/><circle cx="31.4" cy="19.0" r="0.73" fill="#1e1e1e"/><circle cx="30.5" cy="16.2" r="0.80" fill="#1e1e1e"/><circle cx="31.3" cy="18.6" r="0.70" fill="#1e1e1e"/><circle cx="30.3" cy="18.5" r="0.38" fill="#1e1e1e"/><circle cx="33.0" cy="18.5" r="0.46" fill="#1e1e1e"/><circle cx="29.6" cy="15.8" r="0.55" fill="#1e1e1e"/><circle cx="18.7" cy="20.2" r="0.61" fill="#1e1e1e"/><circle cx="17.0" cy="19.7" r="0.42" fill="#1e1e1e"/><circle cx="19.7" cy="18.2" r="0.46" fill="#1e1e1e"/><circle cx="17.5" cy="25.3" r="0.77" fill="#1e1e1e"/><circle cx="17.9" cy="27.5" r="0.75" fill="#1e1e1e"/><circle cx="14.0" cy="19.2" r="0.40" fill="#1e1e1e"/><circle cx="32.5" cy="27.3" r="0.46" fill="#1e1e1e"/><circle cx="27.6" cy="24.4" r="0.72" fill="#1e1e1e"/><circle cx="26.8" cy="25.0" r="0.43" fill="#1e1e1e"/><circle cx="27.9" cy="25.2" r="0.45" fill="#1e1e1e"/><circle cx="2.7" cy="5.5" r="0.63" fill="#1e1e1e"/><circle cx="5.2" cy="11.6" r="0.44" fill="#1e1e1e"/><circle cx="7.4" cy="7.2" r="0.55" fill="#1e1e1e"/><circle cx="7.0" cy="7.5" r="0.52" fill="#1e1e1e"/></svg>
<svg style="left:1583.2px;top:763.0px;" width="40.5" height="30.7" viewBox="0 0 40.5 30.7"><rect x="0" y="0" width="40.0" height="30.7" fill="#363636"/></svg>
<svg style="left:1584.7px;top:764.5px;" width="37.5" height="28.7" viewBox="0 0 37.5 28.7"><defs><linearGradient id="g764.5" x1="0" y1="0" x2="1" y2="1"><stop offset="0" stop-color="#b9b9b9"/><stop offset="0.45" stop-color="#bdbdbd"/><stop offset="1" stop-color="#8a8a8a"/></linearGradient></defs><rect width="37.5" height="28.7" fill="url(#g764.5)"/><path d="M21.8 0 V28.7" stroke="#a9a9a9" stroke-width="0.5"/><circle cx="4.6" cy="13.6" r="0.77" fill="#1e1e1e"/><circle cx="4.8" cy="13.1" r="0.61" fill="#1e1e1e"/><circle cx="10.7" cy="16.6" r="0.63" fill="#1e1e1e"/><circle cx="9.4" cy="10.2" r="0.49" fill="#1e1e1e"/><circle cx="14.5" cy="16.1" r="0.66" fill="#1e1e1e"/><circle cx="18.9" cy="15.1" r="0.78" fill="#1e1e1e"/><circle cx="6.2" cy="7.2" r="0.42" fill="#1e1e1e"/><circle cx="13.4" cy="12.5" r="0.38" fill="#1e1e1e"/><circle cx="10.0" cy="14.9" r="0.36" fill="#1e1e1e"/><circle cx="5.2" cy="13.0" r="0.73" fill="#1e1e1e"/><circle cx="3.9" cy="11.3" r="0.57" fill="#1e1e1e"/><circle cx="6.9" cy="8.0" r="0.48" fill="#1e1e1e"/><circle cx="20.9" cy="11.8" r="0.73" fill="#1e1e1e"/><circle cx="8.2" cy="8.5" r="0.45" fill="#1e1e1e"/><circle cx="23.7" cy="11.6" r="0.69" fill="#1e1e1e"/><circle cx="18.4" cy="14.8" r="0.52" fill="#1e1e1e"/><circle cx="30.7" cy="7.9" r="0.35" fill="#1e1e1e"/><circle cx="26.0" cy="18.9" r="0.56" fill="#1e1e1e"/><circle cx="27.6" cy="9.5" r="0.38" fill="#1e1e1e"/><circle cx="19.7" cy="4.7" r="0.47" fill="#1e1e1e"/><circle cx="26.8" cy="12.0" r="0.78" fill="#1e1e1e"/><circle cx="24.1" cy="7.9" r="0.46" fill="#1e1e1e"/><circle cx="25.0" cy="10.9" r="0.71" fill="#1e1e1e"/><circle cx="26.0" cy="14.8" r="0.55" fill="#1e1e1e"/><circle cx="26.1" cy="16.3" r="0.41" fill="#1e1e1e"/><circle cx="22.9" cy="8.4" r="0.54" fill="#1e1e1e"/><circle cx="31.3" cy="18.6" r="0.79" fill="#1e1e1e"/><circle cx="31.5" cy="15.3" r="0.75" fill="#1e1e1e"/><circle cx="31.4" cy="19.0" r="0.73" fill="#1e1e1e"/><circle cx="30.5" cy="16.2" r="0.80" fill="#1e1e1e"/><circle cx="31.3" cy="18.6" r="0.70" fill="#1e1e1e"/><circle cx="30.3" cy="18.5" r="0.38" fill="#1e1e1e"/><circle cx="33.0" cy="18.5" r="0.46" fill="#1e1e1e"/><circle cx="29.6" cy="15.8" r="0.55" fill="#1e1e1e"/><circle cx="18.7" cy="20.2" r="0.61" fill="#1e1e1e"/><circle cx="17.0" cy="19.7" r="0.42" fill="#1e1e1e"/><circle cx="19.7" cy="18.2" r="0.46" fill="#1e1e1e"/><circle cx="17.5" cy="25.3" r="0.77" fill="#1e1e1e"/><circle cx="17.9" cy="27.5" r="0.75" fill="#1e1e1e"/><circle cx="14.0" cy="19.2" r="0.40" fill="#1e1e1e"/><circle cx="32.5" cy="27.3" r="0.46" fill="#1e1e1e"/><circle cx="27.6" cy="24.4" r="0.72" fill="#1e1e1e"/><circle cx="26.8" cy="25.0" r="0.43" fill="#1e1e1e"/><circle cx="27.9" cy="25.2" r="0.45" fill="#1e1e1e"/><circle cx="2.7" cy="5.5" r="0.63" fill="#1e1e1e"/><circle cx="5.2" cy="11.6" r="0.44" fill="#1e1e1e"/><circle cx="7.4" cy="7.2" r="0.55" fill="#1e1e1e"/><circle cx="7.0" cy="7.5" r="0.52" fill="#1e1e1e"/></svg>
<svg style="left:1581px;top:718px;" width="45" height="36" viewBox="0 0 45 36"><path d="M0.7 13 V0.7 H15.2 M29.8 0.7 H44.3 V13 M44.3 23 V35.3 H29.8 M15.2 35.3 H0.7 V23" fill="none" stroke="#f2f2f2" stroke-width="1.3"/></svg>
<div class="t" style="left:1636px;top:731.62px;font-size:12.5px;color:#ececec;font-weight:normal;">Layer 0 copy</div>
<div class="t" style="left:1636px;top:772.72px;font-size:12.5px;color:#ececec;font-weight:normal;">Layer 0</div>
<div class="a" style="left:1529px;top:644px;width:200px;height:35px;border:4px solid #ec1c24;border-radius:2px"></div>
<div class="a" style="left:1530px;top:707px;width:381px;height:57px;border:4px solid #ec1c24;border-radius:2px"></div>
<div class="a" style="left:1541px;top:989px;width:378px;height:31px;background:#323232;"></div>
<svg style="left:1665px;top:1000px;" width="19" height="10" viewBox="0 0 19 10"><path d="M7.5 1 H5 C2.8 1 1 2.8 1 4.75 C1 6.9 2.8 8.5 5 8.5 H7.5 M11 1 H13.5 C15.7 1 17.5 2.8 17.5 4.75 C17.5 6.9 15.7 8.5 13.5 8.5 H11" fill="none" stroke="#8a8a8a" stroke-width="1.7"/><rect x="5" y="4" width="8.5" height="1.6" fill="#8a8a8a"/></svg>
<div class="t" style="left:1701.5px;top:995.5px;font-family:'Liberation Sans',sans-serif;font-style:italic;font-size:17px;color:#c8c8c8;letter-spacing:-0.5px">fx</div>
<svg style="left:1716px;top:1011px;" width="5" height="3" viewBox="0 0 5 3"><path d="M0 0 H5 L2.5 3 Z" fill="#e0e0e0"/></svg>
<svg style="left:1734px;top:998px;" width="16" height="12" viewBox="0 0 16 12"><rect x="0" y="0" width="16" height="12" rx="1" fill="#d8d8d8"/><circle cx="8" cy="6" r="3.3" fill="#323232"/></svg>
<svg style="left:1768px;top:997px;" width="14" height="14" viewBox="0 0 14 14"><circle cx="7" cy="7" r="6" fill="none" stroke="#d8d8d8" stroke-width="1.4"/><path d="M11.3 2.7 A6 6 0 0 1 2.7 11.3 Z" fill="#d8d8d8"/></svg>
<svg style="left:1783px;top:1011px;" width="5" height="3" viewBox="0 0 5 3"><path d="M0 0 H5 L2.5 3 Z" fill="#e0e0e0"/></svg>
<svg style="left:1801px;top:997px;" width="16" height="13" viewBox="0 0 16 13"><path d="M0.5 2 H6 L7 3.5 H15.5 V12.5 H0.5 Z" fill="#d8d8d8"/></svg>
<svg style="left:1835px;top:996px;" width="15" height="15" viewBox="0 0 15 15"><rect x="0.8" y="0.8" width="13.4" height="13.4" fill="none" stroke="#d8d8d8" stroke-width="1.4"/><path d="M7.5 3.5 V11.5 M3.5 7.5 H11.5" stroke="#d8d8d8" stroke-width="1.5"/></svg>
<svg style="left:1869px;top:995px;" width="15" height="17" viewBox="0 0 15 17"><path d="M0.5 3 H14.5 M5 3 V1 H10 V3" fill="none" stroke="#d8d8d8" stroke-width="1.3"/><path d="M2 4.5 H13 L12 16.5 H3 Z" fill="none" stroke="#d8d8d8" stroke-width="1.4"/><path d="M5.5 6.5 V14.5 M7.5 6.5 V14.5 M9.5 6.5 V14.5" stroke="#d8d8d8" stroke-width="1.1"/></svg></body></html>
